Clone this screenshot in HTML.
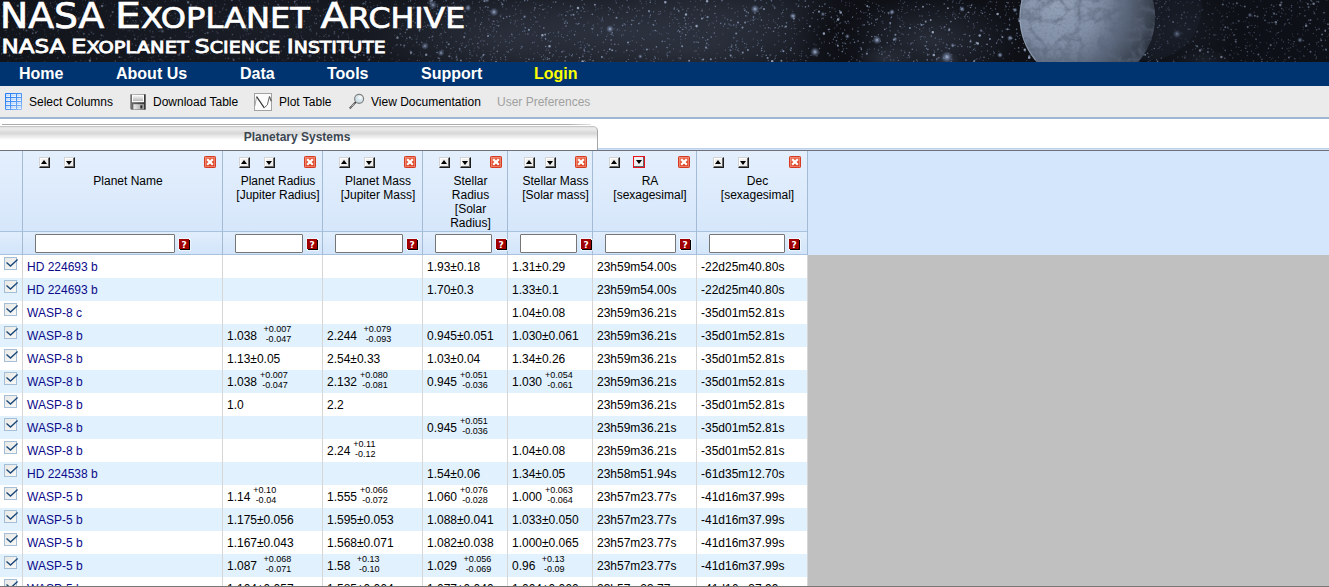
<!DOCTYPE html>
<html lang="en"><head><meta charset="utf-8"><title>NASA Exoplanet Archive</title>
<style>
html,body{margin:0;padding:0;}
body{width:1329px;height:587px;overflow:hidden;background:#fff;position:relative;font-family:"Liberation Sans",sans-serif;font-size:12px;color:#000;}
.abs{position:absolute;}
#banner{left:0;top:0;width:1329px;height:62px;background:#0e1016;overflow:hidden;}
#banner svg{position:absolute;left:0;top:0;}
#nav{left:0;top:62px;width:1329px;height:24px;background:#003471;}
#nav a{position:absolute;top:0;line-height:23px;font-size:16px;font-weight:bold;color:#fff;text-decoration:none;white-space:nowrap;}
#tb{left:0;top:86px;width:1329px;height:31px;background:#ebebeb;border-bottom:2px solid #9db7d3;}
#tb span.l{position:absolute;top:1px;line-height:31px;font-size:12px;white-space:nowrap;color:#000;}
#tb svg{position:absolute;}
#tabline{left:2px;top:124px;width:589px;height:1px;background:linear-gradient(90deg,#ababab 0,#ababab 96%,#e0e0e0 100%);}
#tab{left:-1px;top:126px;width:599px;height:24px;border-right:1px solid #a6a6a6;border-top:1px solid #c6c6c6;border-top-right-radius:5px;background:linear-gradient(#e0e0e0 0px,#ececec 2px,#dedede 4.5px,#d8d8d8 6.5px,#e8e8e8 9px,#fff 13px);box-sizing:border-box;text-align:center;font-weight:bold;color:#3c4652;line-height:21px;padding-right:2px;font-size:12px;}
#tline1{left:598px;top:148px;width:731px;height:1px;background:#bcd3ee;}
#tline2{left:598px;top:149px;width:731px;height:1px;background:#cfe0f5;}
#tline3{left:0;top:150px;width:1329px;height:1px;background:#6f7379;}
#hdr{left:0;top:151px;width:1329px;height:104px;background:#d3e6fc;}
#hdrc{left:0;top:151px;width:808px;height:80px;background:linear-gradient(#e4effd,#d6e7fb);}
#fl{left:0;top:231px;width:808px;height:24px;background:linear-gradient(#e0edfc,#d3e5fa);border-top:1px solid #a9c3df;border-bottom:1px solid #a9c3df;box-sizing:border-box;}
.vs{position:absolute;top:151px;width:1px;height:104px;background:#a3bbd5;}
.vd{position:absolute;top:255px;width:1px;height:332px;background:#d6d6d6;}
.hc{position:absolute;top:174px;text-align:center;line-height:14px;font-size:12px;color:#000;white-space:nowrap;}
.sb{position:absolute;top:157px;width:11px;height:11px;box-sizing:border-box;background:#efefef;border:1px solid;border-color:#d4d4d4 #1c1c1c #1c1c1c #d4d4d4;box-shadow:inset -1px -1px 0 #6a6a6a,inset 1px 1px 0 #fff;}
.sb i{position:absolute;left:1px;top:2px;width:0;height:0;border:3.5px solid transparent;}
.sb.u i{border-top:0;border-bottom:4px solid #000;}
.sb.d i{border-bottom:0;border-top:4px solid #000;top:3px;}
.sb.act{top:156px;width:12px;height:12px;border:1px solid #e8121e;box-shadow:inset -1px -1px 0 #5a6a6a;}
.sb.act i{left:1.5px;top:3px!important;}
.rx{position:absolute;top:156px;width:12px;height:12px;}
.inp{position:absolute;top:234px;height:19px;box-sizing:border-box;border:1px solid #767676;border-radius:1px;background:#fff;}
.q{position:absolute;top:239px;width:10px;height:10px;background:#a00000;box-shadow:1px 1px 0 #000,0 0 0 1px rgba(255,255,255,.55),1px 1px 0 1px rgba(255,255,255,.55);color:#fff;font:bold 9px/12px "DejaVu Sans","Liberation Sans",sans-serif;text-align:center;overflow:hidden;}
#gray{left:808px;top:255px;width:521px;height:332px;background:#c0c0c0;}
.row{position:absolute;left:0;width:808px;height:23px;}
.row.o{background:#e1f1fd;}
.row.e{background:#fff;}
.c{position:absolute;top:1px;line-height:23px;white-space:nowrap;font-size:12px;color:#000;}
.c.n{color:#0a0a8a;}
.ss{display:inline-block;vertical-align:middle;font-size:9px;line-height:10.6px;margin-left:3px;position:relative;top:-2.5px;}
.ss span{display:block;text-align:right;}
.cb{position:absolute;left:4px;top:2px;width:13px;height:13px;box-sizing:border-box;border:1px solid #a5bed8;background:linear-gradient(135deg,#e8e8e5,#f8f8f7);}
.cb svg{position:absolute;left:0;top:-2px;overflow:visible;}
#bot{left:0;top:586px;width:1329px;height:1px;background:#787878;}
</style></head><body>

<div id="banner" class="abs"><svg width="1329" height="62" viewBox="0 0 1329 62"><defs>
<radialGradient id="nb"><stop offset="0" stop-color="#363d4c" stop-opacity="0.9"/><stop offset="1" stop-color="#363d4c" stop-opacity="0"/></radialGradient><radialGradient id="dk"><stop offset="0" stop-color="#07080c" stop-opacity="0.9"/><stop offset="1" stop-color="#07080c" stop-opacity="0"/></radialGradient>
<radialGradient id="st"><stop offset="0" stop-color="#bccae6" stop-opacity="0.9"/><stop offset="0.4" stop-color="#8798bc" stop-opacity="0.55"/><stop offset="1" stop-color="#6a7ba0" stop-opacity="0"/></radialGradient>
<radialGradient id="pl" cx="0.27" cy="0.38" r="0.78"><stop offset="0" stop-color="#95a3b9"/><stop offset="0.4" stop-color="#8290a7"/><stop offset="0.68" stop-color="#5a667a"/><stop offset="0.9" stop-color="#39424f"/><stop offset="1" stop-color="#2a313d"/></radialGradient>
<filter id="tx" x="0" y="0" width="1" height="1"><feTurbulence type="turbulence" baseFrequency="0.05" numOctaves="4" seed="11" result="n"/><feColorMatrix in="n" type="matrix" values="0 0 0 0 0.1  0 0 0 0 0.13  0 0 0 0 0.19  -3.2 0 0 0 1.15"/><feComposite in2="SourceGraphic" operator="in"/></filter>
<filter id="sb" x="0" y="0" width="1" height="1" filterUnits="objectBoundingBox"><feGaussianBlur stdDeviation="0.45"/></filter>
<linearGradient id="lf" x1="0" y1="0" x2="1" y2="0"><stop offset="0" stop-color="#12151c" stop-opacity=".5"/><stop offset=".7" stop-color="#12151c" stop-opacity=".35"/><stop offset="1" stop-color="#12151c" stop-opacity="0"/></linearGradient>
<linearGradient id="rxg" x1="0" y1="0" x2="0.4" y2="1"><stop offset="0" stop-color="#f07a5c"/><stop offset="1" stop-color="#dc3c20"/></linearGradient></defs>
<ellipse cx="620" cy="30" rx="260" ry="70" fill="url(#nb)" opacity="0.80"/>
<ellipse cx="500" cy="40" rx="140" ry="50" fill="url(#nb)" opacity="0.55"/>
<ellipse cx="730" cy="20" rx="130" ry="50" fill="url(#nb)" opacity="0.50"/>
<ellipse cx="930" cy="40" rx="90" ry="45" fill="url(#nb)" opacity="0.70"/>
<ellipse cx="1180" cy="30" rx="60" ry="45" fill="url(#nb)" opacity="0.35"/>
<ellipse cx="250" cy="30" rx="300" ry="60" fill="url(#nb)" opacity="0.45"/>
<ellipse cx="885" cy="58" rx="30" ry="14" fill="url(#nb)" opacity="0.60"/>
<ellipse cx="1205" cy="60" rx="28" ry="12" fill="url(#nb)" opacity="0.50"/>
<ellipse cx="946" cy="60" rx="14" ry="8" fill="url(#nb)" opacity="0.80"/>
<ellipse cx="690" cy="50" rx="120" ry="30" fill="url(#nb)" opacity="0.40"/>
<ellipse cx="835" cy="30" rx="45" ry="40" fill="url(#dk)" opacity="0.7"/>
<path d="M430.4 9.4h.01M865.1 4.5h.01M712.2 22.7h.01M77.1 31.5h.01M49.8 26.9h.01M92.8 5.6h.01M564.2 51.3h.01M164.5 13.8h.01M833.9 58.8h.01M767.0 24.6h.01M1297.4 2.9h.01M1140.9 18.0h.01M191.7 7.3h.01M410.0 50.6h.01M240.2 36.1h.01M849.1 23.1h.01M728.0 3.9h.01M79.2 12.8h.01M904.3 26.5h.01M417.5 36.3h.01M602.3 18.6h.01M1055.7 43.3h.01M324.4 35.6h.01M698.0 54.3h.01M969.4 17.9h.01M1302.7 7.3h.01M555.7 46.9h.01M202.0 30.3h.01M52.1 41.4h.01M1016.1 35.5h.01M1163.5 19.5h.01M924.0 36.9h.01M770.7 28.3h.01M1116.3 58.6h.01M630.1 41.2h.01M80.6 43.5h.01M860.0 61.6h.01M1092.3 17.6h.01M512.7 41.5h.01M30.0 28.6h.01M223.3 7.3h.01M78.4 47.6h.01M171.9 15.4h.01M519.6 54.0h.01M107.1 27.8h.01M730.2 54.8h.01M1088.8 53.6h.01M370.0 25.7h.01M476.8 54.8h.01M1272.8 9.4h.01M234.2 14.4h.01M310.1 30.1h.01M782.9 16.3h.01M5.4 26.0h.01M490.7 35.1h.01M1266.7 42.8h.01M685.1 38.3h.01M898.7 3.3h.01M1195.5 48.4h.01M1162.2 49.5h.01M521.5 24.7h.01M137.6 39.3h.01M82.7 4.2h.01M277.4 10.1h.01M451.9 3.3h.01M0.3 9.4h.01M134.8 22.5h.01M33.9 54.2h.01M816.1 9.2h.01M335.3 21.5h.01M484.0 7.6h.01M1128.2 61.6h.01M619.3 30.0h.01M114.1 6.3h.01M455.4 16.4h.01M1101.5 10.0h.01M30.7 59.0h.01M702.1 9.1h.01M721.9 1.7h.01M701.9 60.7h.01M1147.4 43.2h.01M347.0 22.7h.01M222.0 47.9h.01M707.8 48.3h.01M438.1 13.8h.01M1078.5 61.1h.01M1133.1 50.0h.01M1087.6 45.9h.01M301.3 32.1h.01M472.5 1.8h.01M37.1 17.3h.01M344.4 42.9h.01M1271.2 27.7h.01M1245.3 61.3h.01M1269.2 22.6h.01M293.0 14.1h.01M261.4 12.7h.01M829.4 55.8h.01M1116.9 29.7h.01M867.8 49.6h.01M112.7 41.0h.01M1209.1 48.5h.01M996.9 29.6h.01M237.3 48.9h.01M441.9 49.7h.01M1291.3 24.5h.01M533.4 58.7h.01M963.3 10.5h.01M168.8 9.4h.01M1202.5 50.0h.01M194.3 51.2h.01M1302.8 40.8h.01M465.7 34.0h.01M174.1 0.9h.01M1290.3 40.3h.01M699.8 57.9h.01M576.5 54.0h.01M1098.0 13.1h.01M334.7 18.2h.01M319.7 36.4h.01M344.7 26.0h.01M174.2 56.4h.01M470.2 28.4h.01M775.3 56.1h.01M559.0 56.9h.01M666.7 33.0h.01M695.7 1.2h.01M584.9 11.4h.01M5.2 49.5h.01M229.0 29.4h.01M963.8 34.5h.01M433.2 32.1h.01M738.2 48.6h.01M141.0 34.7h.01M330.2 17.2h.01M1026.3 31.5h.01M746.5 47.1h.01M1212.7 27.5h.01M814.0 31.3h.01M680.7 42.9h.01M601.2 33.1h.01M635.3 58.4h.01M929.3 54.3h.01M1252.2 16.1h.01M743.6 58.5h.01M1116.4 8.5h.01M161.6 27.4h.01M96.4 14.9h.01M97.2 41.5h.01M1041.9 55.6h.01M205.3 44.4h.01M877.5 8.9h.01M1173.3 60.0h.01M291.8 59.1h.01M529.3 30.2h.01M1315.5 51.6h.01M214.6 26.8h.01M685.2 21.0h.01M260.1 19.7h.01M959.7 1.2h.01M736.3 27.3h.01M24.0 20.6h.01M829.2 31.8h.01M85.4 61.1h.01M1047.7 60.2h.01M139.3 16.5h.01M52.6 48.3h.01M359.4 8.0h.01M561.2 56.5h.01M1088.4 16.0h.01M198.5 57.0h.01M758.3 43.4h.01M118.9 3.6h.01M914.6 26.4h.01M96.2 58.2h.01M843.2 49.7h.01M111.3 53.1h.01M88.5 53.5h.01M603.1 21.0h.01M735.0 57.5h.01M356.0 8.0h.01M700.3 14.8h.01M145.5 10.0h.01M67.0 12.5h.01M414.6 18.9h.01M1009.4 18.0h.01M664.6 11.0h.01M461.2 1.1h.01M332.8 1.0h.01M974.3 34.2h.01M251.8 29.4h.01M1242.1 6.6h.01M1088.3 26.8h.01M657.9 51.7h.01M522.4 31.4h.01M914.0 60.9h.01M455.5 51.6h.01M939.2 39.4h.01M537.8 21.5h.01M72.3 8.0h.01M94.0 45.9h.01M339.7 10.1h.01M112.3 52.2h.01M1156.9 41.6h.01M374.7 15.0h.01M389.5 28.5h.01M209.4 27.6h.01M349.9 59.6h.01M1292.6 33.9h.01M324.9 59.9h.01M411.4 22.1h.01M1.4 23.7h.01M630.8 31.2h.01M267.1 31.3h.01M6.6 16.4h.01M119.3 24.8h.01M55.4 1.4h.01M404.3 14.4h.01M778.2 32.8h.01M997.5 40.8h.01M951.6 54.5h.01M517.7 20.2h.01M1308.7 9.3h.01M962.4 39.9h.01M58.2 51.8h.01M1185.4 38.9h.01M975.3 50.4h.01M185.1 32.5h.01M670.3 51.8h.01M1069.4 51.2h.01M776.2 55.4h.01M907.6 43.0h.01M305.6 1.9h.01M176.9 22.4h.01M139.4 51.8h.01M742.3 38.9h.01M832.3 42.2h.01M650.3 0.2h.01M1060.1 46.4h.01M668.4 33.2h.01M876.2 4.1h.01M979.2 15.6h.01M98.9 16.5h.01M969.3 12.7h.01M983.2 60.5h.01M656.5 23.7h.01M636.6 42.4h.01M1019.3 38.3h.01M854.2 4.8h.01M195.9 15.7h.01M987.7 18.9h.01M754.6 0.8h.01M80.6 16.7h.01M893.1 42.9h.01M898.0 18.0h.01M686.5 28.8h.01M619.8 7.3h.01M1187.7 12.4h.01M1299.9 58.0h.01M23.3 28.5h.01M1089.6 60.0h.01M597.3 16.7h.01M278.9 58.6h.01M280.0 36.1h.01M188.4 32.5h.01M1266.2 8.2h.01M1090.1 31.5h.01M1178.6 43.6h.01M307.5 55.7h.01M646.1 1.5h.01M4.8 30.5h.01M599.1 18.7h.01M187.0 21.3h.01M420.1 52.1h.01M2.3 46.5h.01M1115.2 7.4h.01M1231.2 44.2h.01M1198.2 18.0h.01M494.7 24.4h.01M1327.4 36.5h.01M479.4 26.5h.01M365.7 3.0h.01M135.2 51.7h.01M379.6 58.0h.01M331.4 16.5h.01M679.1 11.8h.01M496.2 59.3h.01M1175.2 50.3h.01M838.5 56.6h.01M1250.2 34.1h.01M956.3 3.1h.01M973.3 28.0h.01M1000.3 40.0h.01M380.4 3.0h.01M1231.7 7.9h.01M627.5 21.3h.01M395.7 45.8h.01M1297.5 16.1h.01M871.8 18.7h.01M740.7 24.5h.01M222.4 10.0h.01M276.3 56.2h.01M660.6 13.6h.01M1204.4 61.8h.01M598.0 8.7h.01M255.7 5.6h.01M454.5 5.6h.01M317.8 16.0h.01M757.0 55.0h.01M996.3 25.6h.01M550.1 32.5h.01M500.9 21.0h.01M82.5 17.2h.01M1286.1 7.8h.01M669.0 39.0h.01M1146.7 13.4h.01M360.2 15.4h.01M531.3 27.6h.01M1267.8 52.6h.01M1160.1 1.4h.01M42.9 44.0h.01M1190.4 29.3h.01M780.4 0.0h.01M520.3 57.5h.01M1097.2 53.0h.01M1292.1 15.4h.01M144.9 9.6h.01M694.2 42.3h.01M1251.2 44.7h.01M860.3 47.4h.01M607.8 34.2h.01M52.6 48.5h.01M309.1 57.0h.01M857.9 18.8h.01M170.1 15.6h.01M845.6 43.3h.01M149.0 4.4h.01M697.0 36.1h.01M515.8 13.9h.01M798.8 0.6h.01M400.7 28.6h.01M1274.4 40.0h.01M1174.5 29.5h.01M312.0 15.3h.01M1276.7 43.7h.01M408.5 1.4h.01M662.3 41.8h.01M558.2 15.9h.01M886.9 57.4h.01M301.4 2.1h.01M449.3 26.1h.01M907.1 12.3h.01M1059.3 45.8h.01M671.0 12.7h.01M1288.9 19.3h.01M1089.8 14.3h.01M294.3 47.1h.01M392.0 59.0h.01M658.9 11.6h.01M296.8 25.9h.01M884.2 58.8h.01M194.5 24.4h.01M283.0 60.4h.01M188.6 3.2h.01M79.9 24.4h.01M1193.7 54.8h.01M973.8 61.8h.01M1238.1 20.4h.01M246.5 58.0h.01M991.8 2.0h.01M883.0 23.5h.01M496.9 20.6h.01M224.9 0.2h.01M371.9 21.8h.01M1269.9 7.7h.01M1281.5 12.9h.01M474.0 50.9h.01M1092.4 26.8h.01M65.5 29.4h.01M495.3 57.0h.01M256.5 22.6h.01M1192.1 1.9h.01M546.0 50.3h.01M1018.9 2.5h.01M46.3 3.9h.01M1222.8 15.9h.01M993.1 55.7h.01M450.6 16.9h.01M1272.8 38.3h.01M348.4 44.4h.01M420.6 17.1h.01M5.0 46.9h.01M1218.0 39.3h.01M1253.6 1.5h.01M310.8 29.5h.01M1271.6 59.1h.01M513.7 15.6h.01M571.4 30.6h.01M1233.4 11.3h.01M1066.6 45.8h.01M1093.4 47.9h.01M807.0 20.3h.01M424.7 22.4h.01M1039.6 4.9h.01M262.2 46.7h.01M328.7 4.0h.01M45.0 34.3h.01M432.9 60.8h.01M1174.1 61.2h.01M352.0 5.2h.01M128.1 30.9h.01M943.3 27.7h.01M311.2 25.8h.01M824.4 41.8h.01M994.1 52.5h.01M883.0 7.5h.01M1117.5 18.2h.01M753.4 23.1h.01M980.9 12.3h.01M328.8 15.2h.01M203.8 54.8h.01M768.5 20.2h.01M526.4 61.5h.01M674.2 14.3h.01M1074.4 40.5h.01M1317.0 6.3h.01M631.0 50.8h.01M1117.1 56.7h.01M53.6 18.2h.01M158.4 11.8h.01M1293.1 36.2h.01M1236.2 23.1h.01M1151.1 27.8h.01M345.5 48.2h.01M1256.8 6.6h.01M792.3 38.4h.01M289.3 22.9h.01M187.9 12.6h.01M338.8 37.2h.01M866.0 12.6h.01M15.1 20.3h.01M901.5 11.5h.01M414.9 12.6h.01M1056.9 34.0h.01M84.1 6.3h.01M525.3 34.1h.01M849.5 5.7h.01M217.5 43.1h.01M544.6 17.6h.01M408.8 59.1h.01M415.1 35.1h.01M474.7 25.8h.01M1148.6 61.8h.01M483.5 12.2h.01M967.6 12.6h.01M7.8 55.9h.01M563.2 50.9h.01M539.9 54.7h.01M612.5 10.1h.01M19.7 34.2h.01M851.4 56.4h.01M118.3 38.6h.01M492.9 31.3h.01M193.9 17.6h.01M692.6 57.4h.01M144.6 30.4h.01M1069.6 59.9h.01M262.3 7.9h.01M1253.3 60.5h.01M641.6 3.3h.01M1230.9 24.0h.01M1201.7 38.5h.01M1095.8 9.9h.01M1044.4 13.8h.01M537.6 52.5h.01M1102.0 11.3h.01M289.9 24.8h.01M688.3 23.8h.01M163.5 15.3h.01M963.4 55.6h.01M54.6 34.9h.01M1006.7 2.4h.01M1114.0 7.3h.01M796.8 34.1h.01M833.3 19.0h.01M558.3 36.1h.01M565.8 40.8h.01M593.8 27.2h.01M31.1 38.4h.01M650.5 14.6h.01M1014.8 48.4h.01M609.1 11.1h.01M628.9 6.6h.01M170.7 26.7h.01M121.9 27.4h.01M678.0 2.5h.01M845.8 5.1h.01M974.8 48.2h.01M679.8 3.4h.01M669.7 23.4h.01M1263.7 8.4h.01M1139.0 61.8h.01M972.9 50.5h.01M257.4 60.9h.01M653.7 59.3h.01M1217.4 10.2h.01M1047.8 57.7h.01M87.1 21.8h.01M1005.0 9.8h.01M1191.5 17.0h.01M1084.0 8.9h.01M667.4 57.0h.01M276.9 16.3h.01M672.5 19.8h.01M49.0 11.3h.01M214.3 58.1h.01M903.3 55.5h.01M224.3 48.7h.01M152.9 32.9h.01M845.7 22.3h.01M1160.2 34.4h.01M770.9 54.7h.01M139.0 61.6h.01M837.0 24.4h.01M1060.1 16.4h.01M1316.4 35.8h.01M478.8 47.4h.01M587.8 11.0h.01M988.2 3.0h.01M1089.5 15.7h.01M849.5 61.0h.01M778.6 41.1h.01M415.5 0.1h.01M44.9 9.3h.01M818.7 26.8h.01M681.3 55.5h.01M175.5 14.1h.01M868.0 1.4h.01M3.5 22.0h.01M141.4 22.1h.01M298.0 36.2h.01M782.9 12.7h.01M829.2 29.4h.01M179.1 58.1h.01M323.7 9.3h.01M127.3 39.6h.01M1157.9 48.5h.01M534.2 16.4h.01M15.3 40.0h.01M747.3 21.7h.01M858.0 27.5h.01M1245.5 45.5h.01M330.3 56.0h.01M58.5 33.0h.01M539.6 14.7h.01M77.6 48.3h.01M16.4 34.2h.01M1250.5 8.8h.01M265.2 37.7h.01M673.7 39.8h.01M1081.0 10.8h.01M411.2 18.6h.01M64.4 55.1h.01M1040.6 44.4h.01M8.4 52.4h.01M990.4 28.8h.01M985.8 28.1h.01M300.3 6.5h.01M308.7 2.4h.01M445.9 46.5h.01M923.8 52.4h.01M945.8 16.5h.01M736.0 27.0h.01M1047.9 32.4h.01M352.6 39.8h.01M1282.7 13.5h.01M1169.6 0.9h.01M346.0 14.6h.01M988.6 58.6h.01M991.6 20.3h.01M1169.7 20.4h.01M317.9 56.3h.01M838.2 43.0h.01M884.1 60.7h.01M624.0 52.1h.01M927.1 53.2h.01M581.1 44.9h.01M758.0 19.1h.01M281.7 38.6h.01M103.4 56.5h.01M192.2 1.7h.01M141.8 57.6h.01M458.3 8.8h.01M38.2 2.6h.01M920.5 39.3h.01M926.3 45.7h.01M87.4 36.6h.01M483.0 50.7h.01M1089.2 55.3h.01M87.6 53.8h.01M1215.2 58.5h.01M142.4 12.8h.01M148.8 2.1h.01M1126.6 50.3h.01M842.8 51.2h.01M839.3 17.8h.01M132.7 6.1h.01M1006.5 12.7h.01M424.1 26.3h.01M27.8 15.9h.01M375.6 44.4h.01M489.1 19.9h.01M1281.2 31.2h.01M1131.5 38.3h.01M41.2 25.6h.01M580.0 47.9h.01M460.9 43.7h.01M714.8 13.4h.01M1145.9 5.6h.01M1089.5 10.6h.01M1.7 12.5h.01M1012.9 60.6h.01M5.8 30.4h.01M653.2 49.4h.01M245.2 30.7h.01M461.4 51.6h.01M346.3 58.5h.01M377.1 13.3h.01M929.6 30.9h.01M146.1 39.5h.01M107.5 48.9h.01M926.5 48.8h.01M834.5 22.0h.01M533.3 24.5h.01M1183.4 5.3h.01M1180.7 1.6h.01M273.9 16.3h.01M1197.7 31.1h.01M504.1 54.8h.01M310.4 28.6h.01M706.4 46.8h.01M1000.7 40.1h.01M463.1 20.3h.01M206.4 52.3h.01M879.9 46.0h.01M225.3 27.2h.01M1027.9 35.9h.01M167.5 28.6h.01M1176.3 14.8h.01M254.6 18.7h.01M934.5 52.3h.01M205.5 9.7h.01M329.0 20.2h.01M694.0 10.0h.01M436.0 11.7h.01M1296.0 45.2h.01M135.3 59.7h.01M135.1 23.8h.01M1307.5 49.3h.01M974.5 27.0h.01M260.7 39.6h.01M142.0 12.8h.01M516.1 2.1h.01M530.3 49.0h.01M921.6 31.0h.01M840.4 28.7h.01M188.5 37.4h.01M537.9 45.9h.01M1206.7 26.7h.01M762.8 46.4h.01M559.7 14.2h.01M959.8 54.6h.01M1028.7 43.4h.01M1132.9 42.1h.01M852.6 28.1h.01M416.0 39.0h.01M130.1 26.0h.01M1039.8 44.2h.01M836.8 15.5h.01M562.9 28.2h.01M826.1 25.4h.01M897.4 57.7h.01M243.3 40.6h.01M1034.2 24.1h.01M651.0 60.4h.01M50.7 33.7h.01M213.8 48.5h.01M1250.0 32.2h.01M134.3 35.6h.01M719.0 44.5h.01M680.7 39.6h.01M1101.7 32.3h.01M545.4 58.8h.01M279.2 42.4h.01M521.6 47.3h.01M162.7 61.0h.01M472.4 3.5h.01M364.6 24.8h.01M17.7 26.0h.01M558.9 43.3h.01M468.0 16.4h.01M298.3 46.0h.01M1249.2 32.7h.01M290.9 49.7h.01M520.9 13.1h.01M171.8 48.1h.01M1075.9 39.3h.01M623.5 34.8h.01M300.3 59.8h.01M469.3 39.6h.01M1088.1 50.6h.01M622.1 18.2h.01M728.6 7.8h.01M1108.0 22.0h.01M1130.5 16.6h.01M499.9 15.7h.01M566.3 11.5h.01M3.6 44.8h.01M373.7 15.2h.01M401.1 29.7h.01M569.5 39.5h.01M876.2 22.5h.01M1234.3 53.0h.01M75.8 51.3h.01M1203.8 48.6h.01M186.6 51.5h.01M841.5 0.9h.01M15.3 59.0h.01M871.8 15.5h.01M134.9 8.8h.01M310.5 48.1h.01M460.4 9.5h.01M1201.5 49.1h.01M223.2 55.3h.01M808.5 48.4h.01M888.4 55.4h.01M1047.4 52.0h.01M262.3 43.0h.01M705.4 46.0h.01M582.9 54.7h.01M737.7 16.4h.01M311.2 8.6h.01M655.3 3.6h.01M620.8 9.0h.01M653.0 30.9h.01M717.1 53.5h.01M8.8 52.1h.01M621.9 34.9h.01M884.2 52.1h.01M498.3 26.0h.01M1276.7 4.7h.01M846.6 39.4h.01M37.9 37.8h.01M907.2 57.8h.01M439.2 60.9h.01M678.6 30.0h.01M1192.9 2.1h.01M954.5 38.8h.01M450.0 53.4h.01M486.6 29.4h.01M698.4 47.8h.01M280.1 27.0h.01M561.4 34.3h.01M1098.7 18.2h.01M1100.1 25.0h.01M669.5 16.8h.01M673.0 60.4h.01M869.9 49.1h.01M439.8 19.7h.01M397.7 36.4h.01M843.7 48.6h.01M53.2 44.8h.01M1177.0 33.8h.01M66.1 18.6h.01M8.3 11.8h.01M1224.6 37.7h.01M874.5 48.9h.01M1209.2 37.9h.01M819.6 38.9h.01M925.5 37.0h.01M905.0 13.2h.01M886.4 28.4h.01M1013.6 6.3h.01M240.9 2.3h.01M1029.4 56.7h.01M871.4 22.9h.01M1093.2 48.8h.01M747.0 16.0h.01M401.4 26.2h.01M423.3 26.7h.01M852.9 57.9h.01M72.6 35.2h.01M52.3 7.4h.01M1076.9 35.7h.01M1220.9 27.7h.01M18.8 24.0h.01M786.7 58.1h.01M1303.5 29.5h.01M548.1 6.3h.01M856.5 13.2h.01M201.7 1.0h.01M6.4 42.4h.01M161.7 59.9h.01M117.1 53.9h.01M171.4 1.1h.01M956.0 15.0h.01M974.9 11.6h.01M66.6 48.0h.01M948.3 53.0h.01M969.8 5.2h.01M835.4 44.0h.01M612.1 57.8h.01M337.6 59.8h.01M953.2 0.7h.01M19.6 40.3h.01M1086.2 4.9h.01M413.4 45.2h.01M220.6 53.4h.01M646.3 3.7h.01M488.5 35.6h.01M583.1 42.0h.01M192.6 49.4h.01M482.8 40.0h.01M836.9 25.9h.01M512.6 48.7h.01M1255.8 48.6h.01M753.3 18.1h.01M80.6 60.4h.01M934.6 51.3h.01M441.3 37.6h.01M1299.0 51.5h.01M798.9 19.1h.01M569.6 55.1h.01M500.6 42.5h.01M799.8 55.6h.01M1073.1 17.6h.01M2.2 16.3h.01M561.5 36.4h.01M1084.4 55.0h.01M56.2 51.7h.01M1078.8 53.8h.01M760.1 17.0h.01M1131.2 50.0h.01M909.9 56.7h.01M461.0 5.3h.01M735.8 49.4h.01M266.4 46.5h.01M1238.3 14.5h.01M806.6 42.0h.01M618.4 12.8h.01M338.5 46.6h.01M1052.1 28.5h.01M116.6 50.0h.01M1026.2 14.4h.01M770.3 55.6h.01M1176.3 32.4h.01M633.4 36.5h.01M251.4 11.9h.01M240.1 43.5h.01M482.2 35.0h.01M534.9 32.1h.01M198.0 2.8h.01M1325.2 23.2h.01M141.0 39.2h.01M1046.4 9.7h.01M793.7 21.4h.01M690.4 1.3h.01M44.6 61.4h.01M1151.0 30.2h.01M753.8 16.2h.01M1035.5 26.4h.01M1257.9 47.6h.01M1088.2 59.7h.01M337.6 2.3h.01M267.1 11.2h.01M111.2 3.2h.01M740.8 54.0h.01M609.1 58.7h.01M1209.3 4.0h.01M794.8 24.6h.01M159.4 59.5h.01M341.8 35.0h.01M851.4 59.3h.01M890.1 24.4h.01M595.8 9.9h.01M1283.5 61.5h.01M294.7 2.4h.01M340.0 21.8h.01M1199.8 56.1h.01M1112.7 2.9h.01M1045.1 44.0h.01M859.4 61.1h.01M74.1 9.0h.01M1003.3 58.2h.01M899.6 18.5h.01M786.1 47.0h.01M140.1 20.1h.01M341.6 7.7h.01M639.7 10.5h.01M316.9 8.9h.01M900.6 0.8h.01M953.2 12.1h.01M47.9 57.5h.01M293.1 57.9h.01M1151.9 55.1h.01M185.7 27.7h.01M128.9 57.6h.01M1119.3 39.0h.01M601.2 21.1h.01M1093.8 29.6h.01M834.9 8.9h.01M294.6 3.5h.01M948.5 34.3h.01M192.3 54.0h.01M354.0 25.5h.01M206.9 16.8h.01M1115.8 20.7h.01M223.0 30.4h.01M422.7 56.0h.01M151.7 60.7h.01M75.6 55.5h.01M888.1 13.1h.01M634.5 17.7h.01M342.6 12.5h.01M484.1 61.4h.01M1326.5 57.4h.01M129.7 17.9h.01M1191.0 3.6h.01M965.5 18.2h.01M1300.6 1.0h.01M1072.5 21.1h.01M186.3 0.1h.01M1106.1 32.6h.01M247.0 27.0h.01M1212.0 13.5h.01M759.3 8.6h.01M239.4 47.8h.01M945.7 12.2h.01M105.3 5.4h.01M808.8 30.7h.01M364.0 12.8h.01M813.9 43.9h.01M1078.6 36.1h.01M268.8 4.1h.01M973.8 25.3h.01M959.1 3.4h.01M1077.4 20.8h.01M1118.9 53.6h.01M655.2 1.0h.01M1209.7 29.6h.01M1158.9 16.5h.01M247.3 51.6h.01M487.9 10.1h.01M493.3 36.9h.01M6.2 32.2h.01M592.4 32.0h.01M160.5 44.3h.01M1085.2 53.7h.01M426.6 44.1h.01M506.9 46.6h.01M81.3 54.1h.01M1267.9 30.7h.01M682.2 32.9h.01M714.1 1.3h.01M1285.7 13.9h.01M242.4 6.4h.01M332.9 50.7h.01M40.0 6.0h.01M928.9 12.1h.01M23.5 37.2h.01M766.1 32.4h.01M933.8 6.4h.01M1155.6 44.5h.01M60.0 7.6h.01M656.0 31.0h.01M371.6 7.6h.01M539.1 8.5h.01M786.5 53.4h.01M195.7 35.5h.01M992.2 10.2h.01M1097.8 58.1h.01M516.6 26.1h.01M1116.0 32.6h.01M525.8 58.4h.01M1032.5 21.0h.01M319.5 20.8h.01M578.9 60.8h.01M1069.0 56.6h.01M1083.2 52.6h.01M71.2 32.1h.01M1273.0 57.9h.01M331.3 26.2h.01M840.8 22.6h.01M705.4 4.3h.01M575.5 31.3h.01M27.7 8.6h.01M1288.7 48.1h.01M1245.2 39.3h.01M1075.5 54.8h.01M1175.7 2.1h.01M852.7 16.5h.01M901.6 17.0h.01M720.7 57.3h.01M825.7 15.5h.01M691.5 26.9h.01M1263.7 17.8h.01M405.9 40.1h.01M160.0 36.8h.01M1270.6 31.9h.01M356.7 28.9h.01M709.5 9.2h.01M164.7 8.1h.01M390.2 25.2h.01M383.2 15.1h.01M116.7 33.9h.01M1116.0 37.8h.01M757.8 40.3h.01M267.4 44.0h.01M612.5 34.0h.01M814.4 29.1h.01M412.7 15.0h.01M294.5 31.8h.01M509.2 36.3h.01M15.8 21.9h.01M1145.4 14.8h.01M739.8 30.5h.01M378.5 61.2h.01M392.7 47.9h.01M210.7 4.1h.01M1157.9 27.3h.01M82.4 24.0h.01M584.6 45.6h.01M145.2 14.0h.01M1274.9 45.8h.01M205.4 20.9h.01M468.4 41.9h.01M819.1 52.7h.01M1091.4 32.1h.01M981.8 46.1h.01M1009.6 29.5h.01M1043.2 43.9h.01M1215.6 7.9h.01M1157.3 0.3h.01M1017.6 36.3h.01M661.7 59.7h.01M760.1 25.9h.01M1041.5 54.1h.01M807.1 23.5h.01M601.1 28.4h.01M960.9 18.2h.01M519.2 34.4h.01M511.0 20.0h.01M1046.0 52.7h.01M663.9 27.5h.01M244.8 18.9h.01M192.7 35.7h.01M772.9 5.5h.01M1222.9 20.1h.01M1120.9 52.0h.01M1274.2 12.7h.01M566.7 56.5h.01M14.2 2.9h.01M750.8 30.8h.01M1223.1 48.0h.01M715.7 61.9h.01M687.7 32.1h.01M910.7 24.2h.01M475.4 36.9h.01M466.6 58.8h.01M899.0 32.6h.01M131.5 23.2h.01M532.8 34.8h.01M762.9 54.5h.01M1281.8 30.2h.01M585.0 38.7h.01M1323.8 21.3h.01M704.6 50.6h.01M226.9 19.7h.01M1300.3 51.2h.01M681.2 6.9h.01M1188.8 42.8h.01M1090.5 61.4h.01M1180.3 26.1h.01M207.9 18.0h.01M679.9 31.3h.01M250.0 11.3h.01M837.4 37.4h.01M469.4 61.6h.01M845.9 2.6h.01M546.8 48.8h.01M407.7 42.8h.01M5.2 18.9h.01M1119.2 36.3h.01M887.9 12.2h.01M661.7 34.3h.01M353.5 40.1h.01M706.3 61.8h.01M763.5 25.5h.01M161.5 9.7h.01M1009.4 6.6h.01M133.0 10.6h.01M694.4 51.0h.01M814.7 50.0h.01M82.6 0.8h.01M1024.1 20.0h.01M950.8 21.9h.01M225.2 16.5h.01M132.2 56.0h.01M773.8 21.6h.01M597.8 23.9h.01M72.7 55.2h.01M774.4 59.5h.01M584.3 38.5h.01M331.4 2.7h.01M1237.1 53.0h.01M418.4 55.7h.01M1084.3 18.8h.01M800.8 59.5h.01M658.6 58.9h.01M322.9 24.2h.01M954.8 13.7h.01M410.9 54.3h.01M643.8 49.2h.01M323.5 10.8h.01M476.3 11.6h.01M1291.2 18.0h.01M746.3 7.1h.01M709.4 23.9h.01M535.8 4.1h.01M163.9 51.2h.01M466.8 15.2h.01M254.1 17.6h.01M315.2 2.2h.01M882.8 21.2h.01M207.2 43.8h.01M123.1 16.7h.01M1109.7 7.9h.01M589.2 51.9h.01M1069.8 9.9h.01M469.0 44.8h.01M500.9 59.4h.01M276.5 59.0h.01M670.9 14.1h.01M601.6 8.1h.01M938.9 16.2h.01M1195.6 36.4h.01M489.1 15.3h.01M808.3 13.2h.01M1159.4 7.6h.01M681.8 33.6h.01M359.4 47.8h.01M511.4 40.8h.01M754.4 19.3h.01M518.2 5.3h.01M235.3 52.8h.01M426.7 41.1h.01M144.8 34.8h.01M480.4 31.0h.01M394.7 4.1h.01M413.7 14.0h.01M167.6 44.4h.01M375.3 25.0h.01M1208.0 48.0h.01M1173.2 53.4h.01M175.7 17.1h.01M39.3 42.1h.01M881.9 21.8h.01M548.3 40.9h.01M929.3 15.4h.01M1125.3 21.8h.01M835.7 11.3h.01M153.1 56.6h.01M975.6 44.2h.01M53.8 2.5h.01M215.3 12.3h.01M402.8 23.6h.01M52.1 19.3h.01M848.3 11.1h.01M1115.6 35.4h.01M952.4 15.8h.01M578.0 42.4h.01M463.9 0.1h.01M1108.8 48.1h.01M380.5 2.7h.01M1135.2 37.7h.01M62.9 15.2h.01M147.8 49.1h.01M279.3 56.7h.01M996.1 5.3h.01M923.2 24.4h.01M993.5 51.4h.01M373.7 5.6h.01M1257.7 26.3h.01M1236.2 42.9h.01M981.6 51.5h.01M834.7 28.1h.01M72.2 43.3h.01M569.3 31.7h.01M1233.5 7.9h.01M1012.6 2.7h.01M933.9 50.0h.01M347.1 33.9h.01M1288.4 39.5h.01M722.9 15.5h.01M78.9 22.2h.01M547.1 12.5h.01M412.7 8.5h.01M939.6 41.6h.01M316.1 15.0h.01M684.9 27.6h.01M1243.7 21.8h.01M397.9 54.9h.01M188.6 34.9h.01M443.3 50.6h.01M728.6 47.2h.01M224.9 41.3h.01M795.7 28.6h.01M1018.2 51.5h.01M152.1 17.9h.01M479.1 12.8h.01M80.2 17.4h.01M262.0 43.5h.01M595.4 7.0h.01M431.2 29.1h.01M482.4 10.4h.01M95.4 0.7h.01M1318.5 46.5h.01M111.6 44.5h.01M1302.7 34.9h.01M144.6 30.3h.01M577.1 11.8h.01M721.7 0.5h.01M1222.1 40.0h.01M834.3 58.0h.01M867.3 15.6h.01M326.9 8.6h.01M36.8 48.0h.01M1115.8 18.4h.01M246.8 39.6h.01M1124.0 57.5h.01M223.9 48.6h.01M1103.6 46.0h.01M434.1 11.4h.01M1096.9 19.8h.01M489.8 34.2h.01M490.8 51.5h.01M318.1 2.6h.01M753.4 38.9h.01M1089.4 43.7h.01M1203.0 58.6h.01M657.0 31.0h.01M209.3 18.6h.01M772.3 5.0h.01M914.3 10.1h.01M589.0 60.1h.01M119.2 2.5h.01M584.1 11.8h.01M960.8 0.2h.01M1117.5 53.0h.01M1045.8 26.4h.01M376.4 41.0h.01M683.9 26.1h.01M450.1 27.2h.01M885.3 51.2h.01M1201.4 10.2h.01M393.0 27.5h.01M748.7 21.6h.01M259.7 5.3h.01M430.2 28.5h.01M1290.9 56.3h.01M1150.1 60.4h.01M1278.3 38.4h.01M1078.0 3.7h.01M899.0 37.8h.01M394.8 35.4h.01M1266.3 29.8h.01M860.3 18.6h.01M456.4 54.9h.01M37.0 11.7h.01M902.0 27.7h.01M113.2 40.9h.01M494.4 36.0h.01M553.4 32.9h.01M750.6 24.6h.01M151.8 11.2h.01M1182.8 34.0h.01M149.2 53.5h.01M336.9 5.9h.01M705.4 15.6h.01M650.2 34.3h.01M301.1 35.5h.01M150.2 31.8h.01M782.1 5.0h.01M542.3 4.6h.01M584.1 53.5h.01M731.7 44.3h.01M1005.9 7.1h.01M1316.6 44.7h.01M135.7 51.5h.01M520.9 10.6h.01M1275.9 34.9h.01M1029.9 8.5h.01M1031.5 3.6h.01M314.8 23.1h.01M20.2 36.8h.01M283.3 18.6h.01M940.2 26.4h.01M1181.0 38.5h.01M1159.1 34.9h.01M1219.4 54.0h.01M223.3 46.2h.01M453.7 47.3h.01M904.4 51.2h.01M163.1 23.1h.01M979.8 58.8h.01M959.2 2.7h.01M802.4 6.2h.01M729.4 49.8h.01M150.1 57.4h.01M897.4 15.8h.01M256.7 27.7h.01M1113.9 36.0h.01M150.9 1.3h.01M146.7 49.6h.01M246.2 34.4h.01M385.5 42.6h.01M506.1 8.9h.01M1163.4 33.4h.01M916.4 50.1h.01M1260.9 0.9h.01M455.0 9.4h.01M666.9 54.1h.01M1063.8 2.2h.01M242.3 50.7h.01M903.1 24.3h.01M632.3 9.8h.01M1123.2 24.4h.01M1160.2 37.9h.01M100.8 20.4h.01M287.5 55.4h.01M783.1 2.7h.01M225.6 22.4h.01M621.7 35.8h.01M515.5 21.9h.01M8.0 35.9h.01M443.6 1.3h.01M610.6 61.2h.01M60.3 9.0h.01M891.7 16.9h.01M363.3 31.0h.01M348.3 35.3h.01M701.9 59.3h.01M1318.6 2.1h.01M745.1 47.8h.01M1159.4 48.0h.01M841.4 39.3h.01M482.3 17.5h.01M1057.0 54.1h.01M1247.5 42.2h.01M404.0 47.3h.01M982.8 31.6h.01M844.2 21.7h.01M731.9 25.2h.01M80.3 20.9h.01M429.5 61.3h.01M639.9 22.8h.01M323.5 14.6h.01M464.1 8.4h.01M9.6 54.0h.01M602.2 27.6h.01M755.8 18.7h.01M224.5 4.1h.01M400.7 19.1h.01M965.7 34.2h.01M1245.8 21.1h.01M1224.3 36.2h.01M106.4 11.1h.01M771.5 61.2h.01M474.4 48.0h.01M569.2 53.8h.01M90.0 30.0h.01M1194.9 17.1h.01M342.3 1.4h.01M218.7 16.6h.01M936.1 13.5h.01M531.0 12.4h.01M801.3 53.6h.01M861.3 12.2h.01M975.3 59.7h.01M798.8 4.9h.01M1075.8 54.3h.01M453.4 8.5h.01M250.1 33.3h.01M1163.5 39.7h.01M1226.5 13.2h.01M434.3 46.5h.01M862.4 25.1h.01M902.3 20.9h.01M76.3 25.7h.01M60.4 38.8h.01M444.6 30.7h.01M794.5 15.9h.01M615.8 0.8h.01M1229.7 35.0h.01M1312.4 3.5h.01M816.0 44.9h.01M437.5 5.8h.01M207.6 8.8h.01M1019.6 5.6h.01M1081.8 26.2h.01M715.9 36.5h.01M737.6 40.8h.01M799.5 20.5h.01M984.9 16.0h.01M945.5 47.3h.01M1031.3 19.2h.01M1026.8 60.6h.01M602.3 17.3h.01M695.5 58.3h.01M175.2 0.6h.01M632.3 40.6h.01M1028.9 22.5h.01M1315.1 14.1h.01M1005.5 5.6h.01M37.1 8.3h.01M80.0 31.1h.01M737.9 11.3h.01M1248.9 22.7h.01M198.4 11.0h.01M980.5 57.1h.01M215.4 1.8h.01M1034.1 15.0h.01M1305.5 30.9h.01M845.4 21.3h.01M1063.9 28.5h.01M430.4 56.0h.01M143.3 45.5h.01M87.0 40.0h.01M534.1 53.6h.01M79.7 35.0h.01M544.8 57.0h.01M1255.8 38.9h.01M297.8 15.6h.01M348.6 26.9h.01M307.5 12.6h.01M1008.9 39.8h.01M396.7 61.6h.01M287.9 35.3h.01M208.3 53.5h.01M1155.3 16.6h.01M998.8 51.0h.01M375.5 20.6h.01M645.3 55.2h.01M214.8 42.3h.01M794.2 28.1h.01M769.8 54.7h.01M278.8 54.8h.01M478.9 48.3h.01M1147.4 11.3h.01M1148.2 61.7h.01M395.5 1.5h.01M148.3 60.4h.01M12.5 56.5h.01M200.4 45.6h.01M129.6 10.5h.01M907.4 5.6h.01M451.2 56.9h.01M952.0 54.7h.01M1302.0 2.0h.01M311.8 49.1h.01M916.3 2.3h.01M670.9 14.4h.01M572.1 6.5h.01M26.5 61.4h.01M420.6 54.5h.01M160.1 30.2h.01M180.5 26.6h.01M237.9 42.5h.01M196.6 45.8h.01M665.5 7.0h.01M469.9 30.8h.01M1220.9 21.7h.01M285.9 60.0h.01M1173.7 45.3h.01M362.8 11.0h.01M351.7 4.3h.01M57.4 31.5h.01M542.4 34.5h.01M481.9 0.7h.01M914.5 40.5h.01M722.9 34.0h.01M917.4 60.9h.01M1161.6 44.5h.01M530.6 19.7h.01M557.0 60.3h.01M514.4 23.9h.01M544.9 8.9h.01M1326.8 0.3h.01M807.8 57.4h.01M338.5 37.9h.01M501.0 14.9h.01M263.7 7.2h.01M1120.4 48.6h.01M1207.4 3.1h.01M922.6 20.1h.01M858.8 34.0h.01M419.5 60.2h.01M1.2 46.3h.01M1134.3 31.6h.01M787.2 61.7h.01M311.6 39.0h.01M987.9 23.5h.01M946.5 24.4h.01M699.4 38.0h.01M900.0 20.0h.01M835.8 33.7h.01M296.7 38.0h.01M352.1 56.3h.01M629.0 44.7h.01M693.8 29.6h.01M294.0 8.8h.01M1232.4 32.8h.01M696.3 32.7h.01M1080.9 14.8h.01M229.1 51.0h.01M611.7 39.7h.01M1099.7 55.4h.01M1153.3 2.7h.01M506.7 51.6h.01M1086.8 7.6h.01M204.5 15.6h.01M136.6 22.1h.01M1067.5 32.3h.01M601.8 5.5h.01M525.7 61.8h.01M923.7 27.9h.01M635.7 49.5h.01M1008.4 9.3h.01M904.0 22.7h.01M692.0 14.7h.01M492.8 21.1h.01M506.5 1.1h.01M266.9 35.4h.01M76.7 11.1h.01M954.5 17.0h.01M430.6 15.0h.01M1108.6 5.7h.01M845.4 53.3h.01M268.0 26.2h.01M1053.0 38.3h.01M493.9 2.7h.01M588.1 22.8h.01M947.0 18.3h.01M542.1 40.2h.01M1077.6 21.8h.01M512.1 35.9h.01M1229.1 11.9h.01M1291.0 44.1h.01M494.9 41.3h.01M437.8 4.4h.01M1004.8 23.5h.01M698.8 30.8h.01M1197.8 46.9h.01M34.0 36.8h.01M614.7 28.7h.01M1115.8 25.7h.01M629.4 55.2h.01M584.5 30.5h.01M680.2 51.1h.01M890.9 45.9h.01M533.8 2.5h.01M903.5 34.3h.01M1022.3 47.7h.01M157.0 13.7h.01M102.5 50.7h.01M135.2 5.5h.01M1001.2 35.0h.01M73.1 42.2h.01M945.0 29.9h.01M72.8 42.8h.01M555.4 36.2h.01M1326.5 50.6h.01M1158.8 9.0h.01M444.3 32.1h.01M8.0 61.3h.01M365.0 16.3h.01M416.0 15.8h.01M1141.4 34.5h.01M679.1 26.1h.01M68.0 18.9h.01M1151.9 49.7h.01M1138.5 15.9h.01M268.5 3.2h.01M713.5 23.2h.01M617.0 30.3h.01M775.8 22.7h.01M1065.1 12.4h.01M1221.9 34.5h.01M68.0 19.5h.01M708.5 25.4h.01M750.8 20.1h.01M363.6 49.4h.01M387.4 44.1h.01M1066.5 36.7h.01M604.2 58.0h.01M591.2 54.4h.01M76.7 26.9h.01M849.6 3.0h.01M1146.4 4.5h.01M792.5 11.2h.01M1225.9 34.8h.01M1064.1 30.9h.01M895.5 41.8h.01M391.9 13.1h.01M1114.1 9.0h.01M1219.8 12.8h.01M134.0 5.9h.01M1042.3 59.0h.01M551.1 40.9h.01M342.3 56.2h.01M911.6 9.6h.01M75.3 43.1h.01M55.5 51.8h.01M390.2 14.4h.01M773.6 19.8h.01M745.0 9.5h.01M1211.9 20.1h.01M1118.1 9.4h.01M1062.4 60.8h.01M520.3 2.0h.01M505.0 39.7h.01M296.9 33.8h.01M124.4 28.8h.01M967.8 26.7h.01M902.3 7.1h.01M1101.1 7.6h.01M1227.1 61.8h.01M1248.5 32.6h.01M386.4 21.6h.01M997.2 30.8h.01M1235.7 5.8h.01M644.2 53.6h.01M794.4 33.5h.01M117.5 8.7h.01M360.4 55.4h.01M1123.5 14.1h.01M1228.8 2.0h.01M795.8 60.0h.01M457.6 58.6h.01M872.5 3.1h.01M442.7 27.9h.01M328.8 46.0h.01M237.7 48.8h.01M396.4 4.3h.01M743.1 5.9h.01M733.0 48.9h.01M791.5 28.6h.01M44.8 31.8h.01M129.2 40.1h.01M175.4 35.8h.01M469.0 23.2h.01M881.3 10.2h.01M225.5 58.4h.01M440.7 52.2h.01M1160.8 29.8h.01M198.1 5.8h.01M1168.3 7.3h.01M659.4 33.2h.01M156.3 29.0h.01M218.0 33.2h.01M673.5 22.7h.01M262.8 25.0h.01M270.4 7.9h.01M318.8 54.0h.01M666.9 55.2h.01M20.1 58.5h.01M649.1 49.0h.01M758.1 42.7h.01M304.7 46.5h.01M204.2 16.4h.01M41.1 24.4h.01M688.6 18.1h.01M1183.5 5.2h.01M768.8 14.5h.01M791.1 48.6h.01M944.6 3.9h.01M326.6 37.1h.01M1306.3 2.6h.01M821.7 42.9h.01M1082.7 21.2h.01M1077.2 28.6h.01M1223.8 0.7h.01M1249.7 25.5h.01M541.0 5.5h.01M325.4 45.5h.01M902.1 9.4h.01M457.6 8.7h.01M263.4 13.6h.01M440.0 60.5h.01M1325.4 49.1h.01" stroke="#6c7c9c" stroke-width="1.15" stroke-linecap="round" opacity="0.55" fill="none" filter="url(#sb)"/>
<path d="M637.6 30.8h.01M1035.6 56.3h.01M998.7 39.5h.01M264.5 38.8h.01M1124.0 48.8h.01M122.8 44.5h.01M464.1 10.1h.01M1283.5 41.7h.01M990.8 8.4h.01M1101.0 58.1h.01M1202.5 46.2h.01M1106.3 49.7h.01M784.6 27.0h.01M1096.7 48.6h.01M1157.3 18.5h.01M1277.1 33.0h.01M1257.2 7.2h.01M1287.1 48.8h.01M334.9 52.0h.01M308.4 12.3h.01M608.6 14.7h.01M654.7 56.3h.01M910.8 44.0h.01M521.0 48.6h.01M1054.8 42.3h.01M1251.5 51.2h.01M539.9 5.4h.01M867.1 51.8h.01M451.3 36.9h.01M1111.4 49.2h.01M6.0 30.3h.01M21.7 6.9h.01M1079.7 26.0h.01M803.7 28.4h.01M445.8 13.2h.01M470.1 52.4h.01M823.0 18.1h.01M116.9 16.8h.01M931.9 27.4h.01M878.5 50.0h.01M160.4 42.3h.01M55.2 51.0h.01M244.7 16.8h.01M1272.8 22.5h.01M298.0 55.2h.01M811.0 55.4h.01M524.1 31.0h.01M1270.2 31.4h.01M1313.8 11.7h.01M1103.9 10.1h.01M700.6 0.0h.01M233.0 58.6h.01M604.1 50.2h.01M333.3 21.8h.01M134.1 34.3h.01M1145.9 31.9h.01M500.6 57.6h.01M1187.9 41.3h.01M100.9 38.7h.01M590.2 59.4h.01M480.9 41.0h.01M839.8 23.3h.01M694.0 41.9h.01M1205.7 30.9h.01M483.4 60.5h.01M75.7 51.8h.01M908.4 34.6h.01M595.0 46.6h.01M1184.3 45.2h.01M996.5 2.2h.01M432.2 8.5h.01M1266.5 55.3h.01M192.1 36.4h.01M766.5 2.9h.01M521.3 46.3h.01M852.5 17.4h.01M1013.3 18.1h.01M723.4 26.1h.01M1300.0 40.2h.01M1069.7 41.9h.01M505.7 59.7h.01M943.2 42.8h.01M368.8 10.0h.01M764.4 51.2h.01M1054.8 21.5h.01M185.9 32.0h.01M1166.1 10.1h.01M981.3 10.6h.01M414.6 3.3h.01M395.6 23.7h.01M1285.0 59.7h.01M248.7 19.2h.01M1254.2 12.2h.01M426.5 27.2h.01M144.1 16.1h.01M523.6 23.9h.01M1280.6 16.5h.01M271.1 56.3h.01M598.4 51.9h.01M846.7 48.3h.01M418.3 9.4h.01M1006.2 29.2h.01M742.6 41.6h.01M1000.2 17.1h.01M482.1 56.9h.01M703.5 17.9h.01M837.5 16.1h.01M1025.1 2.6h.01M1098.6 35.1h.01M470.0 58.3h.01M352.9 15.1h.01M92.9 34.0h.01M1001.7 42.0h.01M548.5 50.1h.01M147.9 19.0h.01M856.9 60.0h.01M842.5 42.9h.01M1029.5 24.5h.01M1249.7 46.0h.01M454.2 24.3h.01M1070.8 21.7h.01M246.8 54.0h.01M706.8 32.3h.01M889.6 55.9h.01M177.5 21.0h.01M87.6 25.6h.01M667.3 52.8h.01M887.5 35.8h.01M536.5 35.6h.01M363.9 52.4h.01M1047.9 52.0h.01M200.9 41.6h.01M1002.2 31.0h.01M1193.9 55.7h.01M987.5 50.9h.01M862.3 54.5h.01M174.5 43.7h.01M935.3 38.0h.01M365.6 4.2h.01M801.9 51.1h.01M362.9 13.2h.01M297.5 5.8h.01M898.4 60.4h.01M1066.0 22.3h.01M929.6 4.5h.01M1114.5 20.2h.01M4.6 39.0h.01M184.4 17.1h.01M78.5 27.6h.01M737.5 50.1h.01M52.6 51.3h.01M146.9 13.9h.01M836.5 21.1h.01M439.9 35.2h.01M289.5 49.2h.01M277.7 52.0h.01M1074.8 33.3h.01M40.5 48.2h.01M37.7 31.3h.01M563.4 3.9h.01M837.3 44.9h.01M777.4 24.8h.01M680.6 36.5h.01M300.7 53.8h.01M1323.3 49.9h.01M1277.6 20.4h.01M1310.7 4.4h.01M635.1 8.3h.01M603.3 42.3h.01M941.5 28.2h.01M454.1 11.8h.01M535.4 17.5h.01M258.1 45.6h.01M686.0 27.2h.01M262.7 43.6h.01M261.5 16.5h.01M744.6 43.5h.01M1293.1 46.4h.01M1260.3 57.0h.01M960.2 44.6h.01M83.4 12.7h.01M17.3 53.5h.01M959.5 39.1h.01M350.6 22.0h.01M217.5 39.2h.01M1317.7 19.0h.01M58.8 10.9h.01M472.1 55.7h.01M1069.2 28.2h.01M135.8 6.6h.01M204.5 48.2h.01M626.3 61.4h.01M1211.7 49.3h.01M632.9 51.0h.01M170.5 6.7h.01M748.8 31.5h.01M278.1 15.6h.01M28.2 56.3h.01M943.9 58.6h.01M1303.2 27.1h.01M973.4 23.8h.01M1079.0 52.2h.01M177.9 0.8h.01M284.4 36.3h.01M503.6 0.6h.01M1103.5 48.7h.01M616.3 2.7h.01M1181.5 33.1h.01M94.3 20.0h.01M830.1 54.9h.01M643.9 39.6h.01M273.4 15.1h.01M1203.8 23.7h.01M138.2 36.7h.01M167.8 12.4h.01M606.6 36.3h.01M845.7 43.8h.01M584.3 4.2h.01M962.8 3.3h.01M625.5 24.8h.01M894.3 44.3h.01M318.7 40.3h.01M919.7 29.2h.01M188.4 56.4h.01M796.2 3.9h.01M317.1 61.2h.01M304.0 24.3h.01M1047.3 51.1h.01M842.5 46.0h.01M50.9 5.8h.01M1297.3 49.8h.01M50.6 3.0h.01M319.6 57.7h.01M291.8 41.7h.01M1236.4 39.6h.01M1221.7 16.3h.01M203.9 1.1h.01M1006.2 6.4h.01M1293.3 44.0h.01M248.4 50.0h.01M216.4 31.8h.01M140.6 48.8h.01M1182.4 56.8h.01M3.0 52.8h.01M738.8 50.9h.01M667.8 38.4h.01M790.2 49.6h.01M103.2 3.4h.01M724.9 18.0h.01M527.6 0.5h.01M990.1 1.5h.01M1102.6 50.3h.01M608.7 7.6h.01M863.9 12.8h.01M570.2 6.8h.01M1297.7 33.9h.01M468.5 5.8h.01M970.4 52.7h.01M1127.4 6.3h.01M488.5 18.8h.01M1013.3 9.2h.01M805.9 60.7h.01M1021.7 0.4h.01M99.7 7.0h.01M920.3 37.1h.01M691.2 28.2h.01M541.4 37.9h.01M862.0 56.8h.01M973.7 49.4h.01M1213.2 51.9h.01M952.5 1.9h.01M904.9 52.7h.01M572.5 54.4h.01M239.0 58.5h.01M587.1 43.8h.01M335.8 18.6h.01M463.1 20.1h.01M125.9 27.5h.01M1303.6 40.5h.01M1238.9 47.3h.01M1112.1 61.6h.01M1000.3 17.0h.01M331.9 25.6h.01M27.8 14.3h.01M1177.9 57.1h.01M436.9 47.8h.01M1029.9 55.2h.01M1056.0 33.0h.01M139.4 51.2h.01M416.9 38.9h.01M487.9 33.3h.01M1283.3 10.0h.01M705.6 40.3h.01M715.5 58.2h.01M541.6 56.7h.01M916.7 60.0h.01M119.1 13.2h.01M381.9 56.2h.01M18.1 16.1h.01M951.3 61.4h.01M234.3 27.2h.01M912.9 42.8h.01M991.5 46.7h.01M330.2 15.9h.01M36.8 42.9h.01M278.0 16.1h.01M1281.6 39.9h.01M785.6 40.7h.01M794.6 43.1h.01M403.9 4.0h.01M88.9 0.9h.01M480.4 8.8h.01M150.0 30.6h.01M1288.5 42.6h.01M363.4 47.7h.01M236.4 6.2h.01M402.9 25.4h.01M916.4 27.6h.01M967.9 5.9h.01M1239.0 21.2h.01M1106.1 1.9h.01M1101.4 14.0h.01M1136.3 49.8h.01M891.4 17.2h.01M13.0 11.8h.01M1202.6 9.8h.01M876.1 36.4h.01M878.8 11.2h.01M190.9 6.0h.01M1306.0 23.7h.01M866.8 35.3h.01M296.7 4.0h.01M19.7 52.9h.01M172.9 59.7h.01M483.3 44.8h.01M183.9 48.9h.01M334.4 22.7h.01M695.1 6.9h.01M330.0 49.3h.01M379.1 23.6h.01M1016.4 13.9h.01M257.7 13.6h.01M510.6 22.7h.01M852.5 29.3h.01M1155.8 3.1h.01M882.0 51.9h.01M312.1 1.8h.01M582.6 7.2h.01M611.3 44.1h.01M124.6 7.3h.01M637.3 10.8h.01M306.7 27.3h.01M157.2 4.2h.01M480.0 29.1h.01M1244.7 34.4h.01M95.0 13.8h.01M989.1 34.9h.01M1156.5 59.7h.01M1140.2 6.8h.01M1254.2 32.5h.01M318.6 10.6h.01M1149.1 13.2h.01M110.4 16.4h.01M1228.1 28.6h.01M971.9 4.6h.01M602.1 19.7h.01M272.9 41.1h.01M480.1 7.4h.01M1308.0 29.9h.01M239.2 0.7h.01M867.8 31.9h.01M32.5 29.2h.01M984.1 33.3h.01M311.1 30.9h.01M803.9 40.4h.01M192.8 49.8h.01M1256.7 45.9h.01M1139.4 22.8h.01M1199.7 11.3h.01M301.5 37.1h.01M1198.2 5.1h.01M288.4 2.2h.01M583.5 8.7h.01M254.5 46.4h.01M775.2 58.2h.01M534.2 42.1h.01M16.8 58.8h.01M309.8 29.6h.01M680.0 58.8h.01M654.0 61.5h.01M825.6 13.4h.01M1108.3 12.5h.01M1328.4 28.3h.01M300.7 59.6h.01M427.7 25.2h.01M456.1 41.5h.01M30.5 23.2h.01M215.4 51.3h.01M0.2 37.7h.01M342.7 28.2h.01M746.7 44.1h.01M183.0 14.9h.01M160.2 59.5h.01M198.2 8.5h.01M694.0 36.0h.01M1178.2 3.5h.01M311.4 10.4h.01M778.2 28.0h.01M543.5 55.1h.01M879.4 53.3h.01M1271.8 16.7h.01M1251.9 25.3h.01M68.6 56.7h.01M138.4 1.1h.01M384.9 17.9h.01M1285.0 54.0h.01M558.3 32.8h.01M1128.1 50.0h.01M868.4 31.8h.01M155.0 15.1h.01M874.6 36.4h.01M1064.6 55.7h.01M1279.0 11.9h.01M101.0 55.6h.01M757.9 11.3h.01M919.8 15.9h.01M314.4 22.7h.01M696.2 42.0h.01M97.6 46.0h.01M829.6 29.2h.01M893.2 49.6h.01M12.8 29.5h.01M901.0 44.0h.01M860.6 11.2h.01M1273.8 48.7h.01M309.5 26.7h.01M1273.1 12.8h.01M543.7 59.6h.01M1196.2 14.4h.01M977.2 22.3h.01M881.6 47.5h.01M169.5 13.8h.01M285.7 16.5h.01M47.4 8.4h.01M539.8 26.1h.01M103.4 36.1h.01M1252.4 35.8h.01M472.7 43.7h.01M581.1 10.9h.01M640.2 1.1h.01M898.4 10.0h.01M491.3 59.7h.01M1019.0 51.8h.01M853.3 39.3h.01M936.8 59.9h.01M260.9 47.5h.01M399.8 15.9h.01M1091.9 37.3h.01M1129.2 54.3h.01M782.5 12.3h.01M19.9 33.2h.01M964.4 16.9h.01M93.1 0.3h.01M230.2 43.1h.01M5.2 14.3h.01M352.4 44.1h.01M1312.0 1.2h.01M151.8 57.9h.01M1289.1 9.2h.01M445.7 32.4h.01M425.5 25.9h.01M636.4 16.0h.01M73.1 5.2h.01M215.9 5.7h.01M829.4 43.2h.01M349.5 49.1h.01M968.5 21.2h.01M653.6 11.7h.01M1234.6 34.7h.01M68.1 9.5h.01M920.5 23.9h.01M952.9 14.2h.01M1059.4 49.7h.01M125.2 36.3h.01M254.2 43.9h.01M1068.5 49.1h.01M307.3 5.8h.01M881.7 35.0h.01M183.7 11.9h.01M774.1 6.7h.01M842.5 14.9h.01M343.6 26.3h.01M708.6 44.9h.01M41.1 44.9h.01M293.7 18.0h.01M850.3 42.9h.01M817.0 55.9h.01M272.0 19.3h.01M880.5 16.2h.01M209.1 14.0h.01M1025.1 51.3h.01M951.9 59.4h.01M1055.7 19.2h.01M419.2 44.7h.01M74.0 37.8h.01M118.5 3.0h.01M682.8 9.4h.01M1238.2 54.4h.01M613.7 12.3h.01M158.9 31.4h.01M692.8 22.5h.01M952.0 32.8h.01M1030.5 6.6h.01M93.1 24.0h.01M642.6 15.7h.01M888.5 13.8h.01M422.9 29.6h.01M946.7 47.8h.01M493.9 27.7h.01M1232.7 57.9h.01M822.3 6.5h.01M605.7 39.5h.01M370.2 2.3h.01M1304.0 56.4h.01M171.4 28.9h.01M823.1 18.6h.01M91.1 46.5h.01M1024.3 27.1h.01M113.9 24.4h.01M125.0 59.7h.01M68.1 17.9h.01M1020.6 8.4h.01M141.6 4.4h.01M217.9 33.0h.01M1107.2 10.5h.01M230.8 47.4h.01M565.9 21.0h.01M163.8 15.1h.01M1291.5 7.3h.01M345.0 45.9h.01M1185.1 56.1h.01M628.3 59.3h.01M802.8 17.9h.01M618.3 44.4h.01M975.5 8.0h.01M257.4 59.4h.01M142.2 50.4h.01M450.3 15.4h.01M339.1 29.1h.01M1316.5 9.2h.01M1135.7 19.9h.01M229.7 46.2h.01M454.0 11.6h.01M556.1 50.9h.01M1147.0 35.6h.01M13.8 47.3h.01M806.1 55.8h.01M1265.2 20.3h.01M1127.6 50.8h.01M353.5 22.7h.01M497.9 21.9h.01M502.7 6.8h.01M301.9 56.4h.01M545.7 39.4h.01M1179.2 46.8h.01M324.8 57.0h.01M1068.7 61.4h.01M967.6 46.8h.01M1080.5 15.7h.01M871.7 23.6h.01M1116.0 8.3h.01M716.5 20.9h.01M1090.6 21.4h.01M1121.5 52.6h.01M1168.0 8.6h.01M1246.9 46.1h.01M899.6 40.5h.01M63.8 53.9h.01M728.0 28.3h.01M450.9 48.5h.01M1039.6 53.9h.01M284.6 21.1h.01M331.4 6.2h.01M434.8 1.6h.01M1058.6 14.1h.01M93.9 4.2h.01M984.9 12.3h.01M614.1 24.9h.01M1066.4 59.2h.01M411.8 39.2h.01M1189.1 29.2h.01M1195.7 45.5h.01M414.0 54.2h.01M761.9 6.6h.01M780.8 51.4h.01M689.1 30.0h.01M553.4 54.6h.01M884.5 12.9h.01M481.6 22.5h.01M1274.1 43.1h.01M165.9 56.7h.01M46.4 36.6h.01M574.6 44.5h.01M570.6 5.7h.01M696.0 50.9h.01M1048.4 22.1h.01M295.5 46.2h.01M1065.5 13.6h.01M1173.7 61.5h.01M576.1 23.6h.01M943.4 57.6h.01M268.1 18.7h.01M437.3 45.4h.01M248.3 33.9h.01M664.9 41.4h.01M190.4 59.3h.01M1328.9 34.8h.01M1056.8 11.4h.01M1209.6 34.2h.01M1009.4 53.8h.01M480.7 57.3h.01M275.6 1.5h.01M667.7 55.7h.01M1196.7 59.2h.01M678.9 57.8h.01M744.2 8.9h.01M838.7 49.8h.01M563.3 37.3h.01M344.4 17.1h.01M558.5 31.8h.01M622.4 5.7h.01M7.5 21.1h.01M952.8 46.4h.01M315.0 15.8h.01M686.7 10.9h.01M801.3 56.1h.01M268.5 36.3h.01M957.9 46.5h.01M946.4 44.1h.01M362.2 52.0h.01M1229.5 3.3h.01M1254.7 27.4h.01M114.7 4.3h.01M1059.0 42.0h.01M188.9 28.5h.01M848.8 61.9h.01M446.6 47.5h.01M325.8 12.3h.01M214.3 25.4h.01M821.6 18.8h.01M215.2 13.5h.01M112.9 12.0h.01M419.7 31.3h.01M244.0 29.7h.01M584.5 60.3h.01M646.2 58.6h.01M626.5 12.3h.01M786.7 9.0h.01M224.9 4.5h.01M932.1 60.0h.01M536.1 22.0h.01M565.0 21.8h.01M917.9 24.3h.01M202.4 53.6h.01M760.9 0.4h.01M1129.0 45.2h.01M471.1 39.1h.01M1223.0 24.9h.01M574.9 18.5h.01M736.6 41.1h.01M976.9 58.9h.01M193.1 22.7h.01M1131.7 49.0h.01M784.1 42.0h.01M451.9 58.6h.01M730.1 25.0h.01M242.4 7.2h.01M1192.8 49.6h.01M35.5 20.0h.01M637.4 30.7h.01M483.0 55.5h.01M464.9 33.0h.01M1235.2 39.6h.01M633.8 20.6h.01M514.5 37.8h.01M1044.5 16.2h.01M492.4 24.0h.01M482.2 56.6h.01M716.3 17.1h.01M441.7 50.9h.01M212.9 42.8h.01M28.9 12.0h.01M79.0 49.9h.01M195.2 14.1h.01M76.5 16.4h.01M974.7 44.6h.01M1209.8 58.7h.01M732.1 57.2h.01M119.1 57.4h.01M576.8 12.0h.01M994.2 53.2h.01M512.7 5.8h.01M1160.1 46.7h.01M793.4 60.6h.01M50.6 3.5h.01M165.1 1.4h.01M941.3 39.1h.01M149.3 10.0h.01M240.4 37.8h.01M893.7 60.1h.01M479.3 60.7h.01M577.4 24.2h.01M336.7 14.4h.01M1295.3 61.7h.01M938.1 10.9h.01M239.1 9.4h.01M466.5 45.7h.01M78.3 32.9h.01M904.7 2.1h.01M584.2 49.0h.01M765.1 28.0h.01M1171.3 37.3h.01M447.8 24.5h.01M1253.7 53.3h.01M1215.8 34.8h.01M189.3 10.9h.01M509.4 42.8h.01M6.1 49.7h.01M1044.6 31.9h.01M7.5 49.5h.01M550.3 41.5h.01M757.4 45.2h.01M543.3 59.5h.01M1269.9 57.6h.01M817.6 19.6h.01M500.5 16.7h.01M1201.1 49.1h.01M1047.4 50.9h.01M1316.8 42.7h.01M423.0 47.0h.01M348.6 37.9h.01M210.6 53.2h.01M649.5 17.1h.01M1226.5 5.1h.01M1236.3 46.9h.01M198.1 47.2h.01M762.0 56.2h.01M779.5 26.5h.01M1240.4 5.4h.01M1032.7 6.4h.01M367.6 7.0h.01M1157.9 27.4h.01M965.4 15.9h.01M970.6 40.2h.01M129.7 30.6h.01M959.3 13.3h.01M869.6 17.2h.01M492.4 57.0h.01M1253.4 61.9h.01M567.2 35.4h.01M1074.5 47.0h.01M606.3 53.5h.01M533.3 58.9h.01M628.3 7.4h.01M995.6 9.0h.01M903.1 3.3h.01M1313.4 33.5h.01M984.0 8.1h.01M846.4 23.3h.01M331.1 50.5h.01M44.2 29.6h.01M115.5 52.8h.01M1187.1 2.1h.01M617.4 29.1h.01M955.1 45.2h.01M456.1 57.8h.01M246.3 8.5h.01M1082.7 7.4h.01M247.1 31.0h.01M447.0 10.2h.01M1235.9 29.4h.01M1044.4 15.5h.01M1212.9 13.7h.01M1204.7 38.0h.01M1290.5 47.8h.01M838.4 33.0h.01M1136.1 27.5h.01M130.7 56.7h.01M1070.6 42.3h.01M989.7 14.4h.01M615.8 51.0h.01M1278.5 57.2h.01M213.3 42.4h.01M736.4 25.1h.01M222.9 8.5h.01M625.0 30.6h.01M356.0 22.8h.01M736.3 47.2h.01M783.3 10.1h.01M1177.6 22.8h.01M1275.5 60.9h.01M186.5 36.1h.01M1284.9 23.9h.01M727.6 19.5h.01M38.1 12.7h.01M164.8 17.6h.01M836.6 34.9h.01M1260.2 42.5h.01M481.5 58.9h.01M842.6 33.7h.01M1146.3 41.5h.01M478.9 37.5h.01M399.1 60.1h.01M324.6 60.3h.01M85.6 0.6h.01M735.1 12.8h.01M674.4 7.3h.01M1112.2 41.5h.01M909.3 57.5h.01M1318.5 42.0h.01M947.8 0.1h.01M65.4 26.4h.01M1287.9 19.4h.01M755.5 0.5h.01M552.5 56.0h.01M783.5 51.1h.01M17.4 12.6h.01M238.2 51.6h.01M135.1 57.8h.01M355.4 54.6h.01M685.2 20.1h.01M1284.4 25.1h.01M926.9 4.2h.01M1103.6 60.8h.01M146.9 46.3h.01M359.4 9.2h.01M484.1 41.0h.01M1267.3 61.6h.01M1320.5 38.6h.01M868.4 10.0h.01M964.9 34.2h.01M477.1 55.8h.01M339.0 8.8h.01M210.2 9.3h.01M782.2 49.7h.01M212.7 31.2h.01M763.4 34.7h.01M548.5 33.7h.01M20.1 3.6h.01M561.7 14.7h.01M1005.8 15.0h.01M1095.1 15.0h.01M123.0 29.6h.01M515.0 20.8h.01M1016.8 13.8h.01M890.4 51.8h.01M601.5 31.2h.01M1227.5 37.5h.01M240.4 4.3h.01M109.2 20.6h.01M118.1 40.2h.01M563.0 19.1h.01M680.7 58.1h.01M324.8 9.6h.01M405.8 20.1h.01M1209.3 43.8h.01M569.9 10.3h.01M60.4 7.6h.01M1126.3 40.2h.01M208.1 38.8h.01M77.6 31.4h.01M445.7 6.4h.01M986.8 44.4h.01M678.6 10.4h.01M889.9 26.9h.01M878.8 5.7h.01M1199.6 0.2h.01M296.0 24.7h.01M263.7 5.4h.01M913.6 61.6h.01M445.2 16.5h.01M891.3 13.8h.01M532.6 42.7h.01M572.4 9.7h.01M93.6 33.7h.01M1316.5 57.0h.01M132.7 31.1h.01M649.1 12.0h.01M890.2 30.7h.01M1074.9 18.1h.01M1241.1 50.5h.01M629.3 8.8h.01M642.8 7.9h.01M911.3 43.2h.01M768.3 60.5h.01M60.1 44.3h.01M1064.4 7.0h.01M428.0 3.3h.01M774.8 44.8h.01M462.5 43.1h.01M487.4 44.2h.01M368.0 60.6h.01M582.0 0.2h.01M121.6 45.0h.01M1149.2 39.5h.01M206.5 54.1h.01M952.7 7.1h.01M505.8 41.6h.01M4.8 2.6h.01M470.0 54.2h.01M1324.2 19.7h.01M1207.9 48.7h.01M1149.7 36.5h.01M1288.3 39.9h.01M1259.7 35.1h.01M261.2 32.2h.01M641.9 20.9h.01M496.6 31.7h.01M781.5 13.8h.01M368.7 31.2h.01M669.7 26.0h.01M882.7 11.5h.01M706.8 17.1h.01M1023.4 43.6h.01M1038.0 32.1h.01M330.9 57.4h.01M678.9 23.3h.01M385.9 24.9h.01M941.8 50.8h.01M641.3 45.3h.01M283.0 28.0h.01M475.7 19.0h.01M477.7 46.8h.01M974.6 12.9h.01M310.7 48.6h.01M870.0 41.9h.01M844.2 43.0h.01M362.5 3.8h.01M479.3 2.0h.01M1278.5 32.5h.01M890.7 59.9h.01M1069.1 14.2h.01M447.8 6.7h.01M1057.4 45.7h.01M648.1 22.9h.01M358.6 30.2h.01M946.3 55.5h.01M1128.1 53.8h.01M583.8 26.1h.01M417.4 60.4h.01M243.7 9.8h.01M373.4 57.2h.01M1133.3 20.6h.01M1131.9 55.2h.01M567.8 11.9h.01M1027.0 23.2h.01M158.6 56.0h.01M584.1 24.6h.01M791.1 15.8h.01M26.9 24.2h.01M504.1 0.7h.01M494.1 47.2h.01M442.5 42.1h.01M830.0 11.7h.01M27.1 41.8h.01M812.0 18.2h.01M266.1 53.0h.01M1208.4 14.5h.01M778.8 35.6h.01M427.9 2.3h.01M432.4 40.0h.01M800.0 31.6h.01M162.6 13.2h.01M413.8 25.8h.01M482.7 55.9h.01M154.2 61.2h.01M319.5 53.1h.01M323.7 36.4h.01M501.3 2.4h.01M1058.4 50.2h.01M357.7 48.1h.01M636.8 61.2h.01M72.3 23.6h.01M302.8 38.7h.01M1033.9 52.2h.01M728.8 24.0h.01M1062.7 6.5h.01M345.5 46.7h.01M585.3 61.6h.01M120.9 28.6h.01M282.4 0.1h.01M124.3 5.6h.01M490.3 26.8h.01M674.9 17.9h.01M932.9 32.0h.01M1304.8 10.5h.01M678.6 30.6h.01M494.1 53.4h.01M278.4 54.4h.01M475.5 20.8h.01M817.1 34.9h.01M377.4 5.2h.01M1269.5 22.9h.01M152.0 40.7h.01M707.0 20.3h.01M436.5 52.4h.01M450.0 25.9h.01M1271.7 22.4h.01M534.3 10.0h.01M880.4 41.2h.01M593.2 25.2h.01M309.3 49.0h.01M607.7 51.6h.01M498.3 45.5h.01M38.2 13.6h.01M1276.6 42.3h.01M898.0 30.8h.01M627.7 12.2h.01M229.9 40.0h.01M922.1 16.0h.01M856.6 8.4h.01M814.7 10.6h.01M677.2 19.5h.01M731.8 8.3h.01M642.4 38.2h.01M179.1 19.1h.01M901.9 33.9h.01M819.6 48.4h.01M759.5 13.8h.01M588.1 51.5h.01M753.1 46.7h.01M483.8 27.8h.01M1288.9 51.0h.01M867.6 6.6h.01M813.2 2.1h.01M1241.2 60.3h.01M967.6 16.6h.01M1124.1 11.0h.01M1100.2 32.3h.01M20.9 55.2h.01M584.8 51.5h.01M915.0 33.0h.01M1146.2 12.6h.01M1194.2 21.0h.01M34.6 20.9h.01M87.8 4.5h.01M829.5 7.5h.01M212.2 18.1h.01M370.5 57.0h.01M1203.3 53.9h.01M1315.5 27.3h.01M1057.6 17.4h.01M1231.3 50.3h.01M973.0 14.1h.01M121.6 57.4h.01M733.8 38.0h.01M1145.6 8.9h.01M929.4 28.8h.01M1044.7 28.3h.01M261.4 59.3h.01M373.7 46.2h.01M1104.7 15.4h.01M923.7 24.6h.01M297.8 13.5h.01M1267.9 22.8h.01M677.6 31.1h.01M35.3 46.7h.01M990.3 54.3h.01M474.4 13.0h.01M461.7 45.4h.01M874.5 25.2h.01M697.3 9.6h.01M1220.7 29.3h.01M673.5 48.8h.01M263.0 44.8h.01M469.5 50.4h.01M125.4 17.1h.01M844.7 29.9h.01M500.9 35.9h.01M289.4 27.1h.01M2.5 49.5h.01M337.5 51.5h.01M733.8 37.3h.01M832.0 7.8h.01M1032.9 18.1h.01M1146.6 48.8h.01M901.3 50.5h.01M580.3 41.7h.01M1266.3 11.7h.01M133.9 25.5h.01M677.2 9.2h.01M294.0 53.7h.01M515.6 9.2h.01M243.2 35.8h.01M252.4 29.5h.01M714.6 27.3h.01M669.4 51.9h.01M22.2 57.7h.01M264.8 2.4h.01M1020.1 35.3h.01M714.9 13.5h.01M1038.0 19.0h.01M966.1 14.2h.01M761.3 40.2h.01M493.9 29.8h.01M86.7 39.9h.01M918.7 9.5h.01M731.9 45.5h.01M134.4 52.0h.01M1156.8 3.1h.01M330.1 5.2h.01M335.8 5.3h.01M650.4 15.5h.01M398.9 28.6h.01M493.8 48.9h.01M960.5 7.1h.01M297.0 0.5h.01M437.6 6.7h.01M926.5 48.4h.01M1323.4 13.0h.01M48.7 46.9h.01M547.2 57.7h.01M521.6 19.4h.01M96.6 58.8h.01M680.6 27.3h.01M580.9 47.7h.01M1104.2 29.5h.01M236.8 25.2h.01M1184.6 25.3h.01M878.4 34.7h.01M613.1 35.6h.01M325.8 34.6h.01M1149.2 5.0h.01M490.3 54.6h.01M1300.1 0.8h.01M833.3 39.2h.01M1120.5 29.1h.01M174.1 18.6h.01M947.2 45.2h.01M271.9 39.8h.01M872.8 40.8h.01M29.1 27.4h.01M431.9 37.0h.01M447.5 7.9h.01M890.9 17.8h.01M1050.8 19.0h.01M725.4 50.1h.01M153.6 45.3h.01M90.6 58.0h.01M33.4 44.9h.01M490.0 11.1h.01M524.9 31.1h.01M551.4 7.6h.01M694.8 18.6h.01M1285.5 23.8h.01M578.5 14.1h.01M1287.5 19.9h.01M858.9 51.6h.01M522.5 46.8h.01M370.5 6.8h.01M56.1 27.8h.01M1161.5 12.6h.01M585.4 47.3h.01M367.0 9.5h.01M690.1 26.4h.01M1247.3 55.6h.01M316.4 34.8h.01M553.2 2.1h.01M590.5 56.8h.01M402.4 36.3h.01M944.0 3.9h.01M1228.2 6.8h.01M400.7 44.4h.01M25.7 23.3h.01M168.3 29.3h.01M21.0 9.4h.01M295.6 5.1h.01M120.3 12.1h.01M688.0 8.5h.01M1091.3 25.8h.01M334.7 14.9h.01M1115.8 2.9h.01M986.4 6.1h.01M1255.3 25.3h.01M794.3 53.5h.01M133.5 4.0h.01M921.7 36.4h.01M958.2 17.2h.01M660.4 11.6h.01M580.9 17.5h.01M778.4 18.5h.01M365.2 39.8h.01M113.7 49.7h.01M658.9 14.2h.01M152.7 31.5h.01M669.7 44.6h.01M496.9 25.6h.01M1186.2 17.0h.01M1303.8 55.3h.01M1316.0 58.5h.01" stroke="#7585a6" stroke-width="1.35" stroke-linecap="round" opacity="0.62" fill="none" filter="url(#sb)"/>
<path d="M341.8 50.5h.01M813.2 12.6h.01M1325.7 40.2h.01M1076.1 34.6h.01M105.7 53.5h.01M233.2 16.1h.01M818.9 12.0h.01M614.7 44.2h.01M127.6 41.0h.01M138.9 29.5h.01M863.1 42.6h.01M57.3 11.8h.01M1276.1 24.2h.01M564.6 23.2h.01M925.2 45.9h.01M864.1 24.9h.01M756.9 32.0h.01M249.7 58.9h.01M1282.3 48.2h.01M1319.1 28.9h.01M1115.2 14.9h.01M987.1 44.3h.01M1247.4 51.7h.01M1168.6 16.6h.01M1046.5 29.5h.01M415.3 22.8h.01M1061.7 52.3h.01M1122.5 41.5h.01M226.3 9.7h.01M754.9 13.1h.01M447.3 6.4h.01M205.7 44.5h.01M297.2 52.6h.01M437.4 52.6h.01M402.2 16.6h.01M524.7 0.7h.01M578.8 23.6h.01M16.8 53.4h.01M498.6 0.0h.01M1276.3 14.2h.01M336.2 1.5h.01M132.3 44.0h.01M773.5 31.3h.01M327.2 17.8h.01M1289.2 23.1h.01M1315.0 55.0h.01M165.6 52.6h.01M28.0 44.1h.01M1075.9 43.1h.01M730.7 50.4h.01M205.2 33.5h.01M353.3 24.7h.01M254.2 43.9h.01M761.7 48.3h.01M834.9 37.1h.01M1225.2 50.4h.01M753.2 20.2h.01M1233.1 23.0h.01M135.7 20.7h.01M938.8 57.7h.01M858.1 41.1h.01M1245.7 48.2h.01M592.0 28.6h.01M1009.6 19.7h.01M145.9 38.4h.01M1075.1 15.4h.01M908.6 55.3h.01M169.7 8.4h.01M655.2 20.7h.01M1261.8 61.8h.01M592.2 49.2h.01M839.6 10.8h.01M1291.5 10.8h.01M101.0 28.1h.01M23.7 29.8h.01M547.6 59.2h.01M549.7 52.7h.01M1036.3 36.3h.01M316.0 18.9h.01M653.2 24.5h.01M858.0 31.3h.01M429.3 37.6h.01M1324.4 12.6h.01M446.1 0.7h.01M124.6 3.4h.01M562.0 51.9h.01M927.3 59.9h.01M1112.3 36.3h.01M771.4 0.8h.01M509.7 16.2h.01M824.9 4.1h.01M720.7 23.3h.01M653.8 25.1h.01M135.8 45.4h.01M1063.7 37.1h.01M153.9 37.1h.01M1157.6 61.2h.01M1008.0 2.8h.01M1167.5 41.2h.01M367.5 57.0h.01M1097.9 55.5h.01M328.9 35.8h.01M503.5 18.4h.01M1011.7 38.2h.01M441.0 33.7h.01M1233.8 35.1h.01M1214.1 35.1h.01M1318.6 1.8h.01M611.3 34.2h.01M965.9 60.1h.01M828.4 29.6h.01M842.9 33.1h.01M936.9 58.7h.01M18.5 19.9h.01M1164.7 3.7h.01M1050.3 1.9h.01M861.4 49.6h.01M316.4 23.6h.01M300.9 43.7h.01M702.8 37.5h.01M432.6 36.4h.01M1268.5 48.3h.01M1264.9 15.3h.01M685.8 23.9h.01M459.9 49.8h.01M232.5 34.6h.01M1028.7 58.0h.01M24.7 16.8h.01M655.3 58.1h.01M216.9 52.1h.01M527.9 34.0h.01M1233.3 4.0h.01M437.9 9.7h.01M177.8 18.8h.01M931.3 36.0h.01M161.9 49.7h.01M674.2 8.9h.01M1090.4 50.9h.01M288.1 58.3h.01M1077.0 14.2h.01M1.3 53.8h.01M1097.8 6.1h.01M1018.6 47.9h.01M842.2 51.6h.01M1308.8 20.3h.01M1108.3 57.1h.01M416.7 42.4h.01M909.5 52.6h.01M753.4 17.1h.01M334.4 33.7h.01M179.9 53.3h.01M1181.8 15.0h.01M926.6 41.7h.01M161.9 48.3h.01M1018.4 19.0h.01M130.5 17.5h.01M1025.5 28.9h.01M1083.6 9.9h.01M141.6 21.6h.01M1169.3 10.0h.01M97.6 46.7h.01M121.4 41.4h.01M110.9 15.3h.01M881.9 54.2h.01M543.8 27.9h.01M41.3 21.1h.01M321.7 48.9h.01M949.2 48.6h.01M706.7 43.4h.01M169.1 23.9h.01M389.3 17.5h.01M982.4 13.3h.01M432.4 17.5h.01M1148.3 39.6h.01M638.8 23.6h.01M1224.8 58.2h.01M597.6 35.1h.01M1146.3 15.9h.01M343.7 6.4h.01M667.1 47.6h.01M208.0 26.8h.01M1316.6 29.8h.01M508.2 52.0h.01M1185.6 23.3h.01M164.1 39.5h.01M984.0 57.2h.01M877.2 19.1h.01M684.4 17.8h.01M592.7 29.0h.01M1212.3 56.2h.01M1231.1 29.6h.01M1281.7 8.6h.01M1224.1 39.7h.01M1159.5 25.6h.01M1316.9 1.6h.01M1126.8 50.8h.01M497.3 51.4h.01M283.9 46.7h.01M622.6 25.5h.01M261.2 49.6h.01M971.4 5.5h.01M1299.8 13.7h.01M498.7 25.7h.01M766.2 55.2h.01M1256.1 39.3h.01M485.8 6.7h.01M91.5 32.2h.01M775.1 27.7h.01M1305.7 25.6h.01M466.5 25.9h.01M228.3 58.2h.01M785.4 33.7h.01M565.9 15.5h.01M419.2 30.6h.01M593.1 60.7h.01M748.3 12.8h.01M71.4 9.9h.01M459.6 48.5h.01M1181.8 14.7h.01M1037.0 27.4h.01M714.3 33.0h.01M56.6 4.1h.01M887.2 42.7h.01M505.5 57.0h.01M1089.7 18.7h.01M89.0 34.3h.01M869.6 13.9h.01M58.3 30.2h.01M45.4 45.7h.01M831.3 17.3h.01M592.3 14.4h.01M247.1 11.2h.01M1084.0 28.1h.01M950.9 21.5h.01M1072.3 36.9h.01M869.2 24.3h.01M746.6 11.8h.01M1294.1 41.7h.01M707.7 39.6h.01M133.1 20.7h.01M306.5 52.3h.01M17.1 27.6h.01M1154.3 48.5h.01M955.3 18.7h.01M308.7 43.7h.01M396.9 44.8h.01M465.1 47.2h.01M761.6 50.6h.01M1309.9 23.5h.01M1311.1 0.6h.01M1165.9 1.8h.01M724.7 24.1h.01M1023.2 19.5h.01M276.7 48.6h.01M731.4 46.9h.01M650.3 2.3h.01M1024.9 13.5h.01M627.1 0.0h.01M344.2 41.3h.01M1015.6 39.5h.01M589.0 45.4h.01M888.9 12.8h.01M711.2 37.1h.01M968.5 12.3h.01M413.0 21.3h.01M127.5 21.6h.01M969.6 35.8h.01M229.9 45.4h.01M155.2 46.6h.01M196.3 6.0h.01M334.5 31.9h.01M358.9 54.8h.01M1247.1 17.6h.01M996.6 43.1h.01M745.8 15.8h.01M1262.0 59.3h.01M17.5 20.5h.01M426.6 12.3h.01M571.8 55.7h.01M31.7 51.8h.01M410.6 0.8h.01M1195.7 16.9h.01M281.9 7.2h.01M488.0 7.4h.01M238.8 15.5h.01M768.6 27.7h.01M405.4 32.6h.01M1028.8 44.9h.01M456.5 56.9h.01M1051.6 34.8h.01M632.0 20.4h.01M178.2 54.9h.01M808.5 6.1h.01M1230.0 55.0h.01M44.7 43.4h.01M316.6 33.2h.01M1108.7 21.7h.01M662.3 41.2h.01M255.6 38.8h.01M565.1 60.9h.01M249.4 44.1h.01M54.7 17.0h.01M156.5 9.2h.01M702.0 10.8h.01M1056.3 6.0h.01M828.0 53.4h.01M168.2 13.5h.01M1016.6 29.2h.01M1238.8 21.0h.01M528.9 59.4h.01M457.0 59.9h.01M1184.2 12.4h.01M725.4 58.4h.01M156.0 52.6h.01M1028.9 46.5h.01M798.4 6.2h.01M1273.7 6.3h.01M1041.4 44.8h.01M421.8 42.4h.01M545.7 46.5h.01M57.6 57.9h.01M510.9 49.8h.01M626.7 50.4h.01M400.2 33.8h.01M33.5 30.3h.01M105.2 53.3h.01M900.1 26.4h.01M1294.8 58.7h.01M1271.5 5.1h.01M935.8 45.1h.01M805.3 1.0h.01M1227.8 27.2h.01M790.8 50.5h.01M365.8 1.8h.01M1227.2 16.8h.01M54.7 8.5h.01M1322.1 45.9h.01M279.0 9.1h.01M1193.1 41.2h.01M774.8 8.1h.01M549.3 58.7h.01M4.4 26.0h.01M75.8 61.9h.01M138.7 59.1h.01M1118.0 45.4h.01M56.2 43.1h.01M655.2 30.5h.01M193.0 31.8h.01M1065.9 8.2h.01M1164.4 26.0h.01M353.7 14.8h.01M611.0 40.1h.01M757.3 55.2h.01M679.7 31.8h.01M1314.3 13.3h.01M22.0 20.4h.01M416.2 7.7h.01M555.7 2.1h.01M1223.8 30.0h.01M1167.9 43.2h.01M970.0 47.0h.01M400.9 45.2h.01M273.9 34.4h.01M791.2 48.1h.01M223.0 21.3h.01M1095.5 49.9h.01M1299.7 7.3h.01M279.3 6.6h.01M961.8 46.2h.01M861.3 48.3h.01M685.7 34.9h.01M1224.1 40.2h.01M871.8 36.5h.01M656.4 46.9h.01M761.0 8.0h.01M566.0 26.1h.01M574.5 34.8h.01M480.7 24.3h.01M567.3 23.0h.01M1291.6 5.6h.01M22.5 44.7h.01M525.2 27.8h.01M786.5 22.8h.01M317.9 1.0h.01M1161.3 58.2h.01M380.0 28.8h.01M430.4 3.6h.01M1186.3 51.9h.01M320.4 15.8h.01M927.9 49.4h.01M624.2 24.0h.01M310.4 49.5h.01M1147.6 53.2h.01M152.0 36.8h.01M1309.3 44.3h.01M610.3 9.0h.01M80.4 45.4h.01M91.2 50.2h.01M884.7 29.4h.01M1184.9 57.8h.01M819.5 6.2h.01M782.2 26.1h.01M331.7 57.6h.01M970.5 7.5h.01M304.3 21.2h.01M761.4 20.1h.01M584.2 50.4h.01M241.6 44.6h.01M439.4 58.6h.01M1264.9 20.3h.01M805.5 6.9h.01M545.5 38.6h.01M848.1 21.2h.01M45.1 7.7h.01M744.9 10.6h.01M406.8 38.3h.01M1197.1 31.9h.01M338.4 36.3h.01M366.3 48.5h.01M207.4 16.2h.01M582.9 56.3h.01M219.8 11.9h.01M175.0 13.2h.01M441.6 24.5h.01M1009.6 25.0h.01M631.4 24.6h.01M1028.9 56.0h.01M565.5 57.1h.01M333.1 60.6h.01M698.2 42.3h.01M506.8 16.8h.01M179.6 54.9h.01M477.9 43.3h.01M612.3 32.7h.01M274.9 11.0h.01M446.9 42.3h.01M722.1 0.1h.01M944.6 26.9h.01M91.6 16.1h.01M281.2 51.0h.01M731.0 20.3h.01M330.4 18.1h.01M372.3 21.5h.01M1050.8 48.9h.01M927.8 54.9h.01M869.1 7.0h.01M59.2 10.2h.01M343.0 32.8h.01M1092.5 36.3h.01M571.1 15.0h.01M1304.7 46.7h.01M453.5 2.9h.01M1305.0 15.9h.01M1126.6 7.3h.01M867.9 22.1h.01M1181.4 18.4h.01M133.9 12.3h.01M1070.8 60.7h.01M854.5 42.3h.01M374.9 16.9h.01M115.3 61.1h.01M57.7 38.0h.01M465.0 11.6h.01M579.5 57.7h.01M329.3 10.2h.01M836.5 40.7h.01M678.7 11.1h.01M1161.8 6.9h.01M231.4 15.0h.01M682.8 29.5h.01M735.8 45.1h.01M1188.2 29.0h.01M55.7 51.5h.01M24.5 19.7h.01M190.2 37.3h.01M1039.2 8.0h.01M391.2 52.8h.01M915.8 6.7h.01M912.3 49.2h.01M543.0 9.6h.01M875.8 19.8h.01M177.8 10.2h.01M534.9 7.9h.01M511.8 34.2h.01M733.8 25.0h.01M1063.4 5.4h.01M438.3 57.9h.01M1148.7 57.1h.01M1017.0 33.2h.01M1046.7 35.5h.01M156.2 15.8h.01M129.5 54.3h.01M428.0 25.3h.01M715.3 6.3h.01M938.0 49.3h.01M1058.0 54.6h.01M421.7 9.0h.01M1012.1 43.0h.01M493.8 21.3h.01M204.2 51.6h.01" stroke="#8494b4" stroke-width="1.65" stroke-linecap="round" opacity="0.68" fill="none" filter="url(#sb)"/>
<path d="M612.2 50.3h.01M451.5 19.9h.01M682.1 46.2h.01M1173.1 21.9h.01M921.6 25.0h.01M1144.9 47.1h.01M738.0 22.5h.01M363.8 54.9h.01M1064.4 18.9h.01M112.6 12.1h.01M1281.4 2.4h.01M1076.5 32.8h.01M736.2 33.4h.01M545.2 34.6h.01M119.6 57.0h.01M136.8 8.6h.01M893.8 39.7h.01M1072.1 42.9h.01M1236.9 3.2h.01M14.2 14.7h.01M1035.2 9.5h.01M706.0 47.8h.01M207.7 32.7h.01M1197.1 46.3h.01M528.9 29.7h.01M369.3 59.6h.01M1040.1 42.2h.01M404.3 45.4h.01M646.9 49.5h.01M483.6 54.7h.01M909.9 27.9h.01M747.9 49.9h.01M703.2 59.5h.01M9.6 55.6h.01M949.1 30.3h.01M1129.5 9.2h.01M448.7 44.3h.01M1094.3 23.1h.01M1321.2 40.2h.01M60.2 7.6h.01M101.5 35.3h.01M427.8 16.2h.01M594.9 4.8h.01M1207.9 52.0h.01M742.5 27.6h.01M409.9 37.4h.01M460.9 60.5h.01M1270.7 45.1h.01M1097.7 4.7h.01M164.4 21.4h.01M167.7 26.2h.01M1310.5 51.7h.01M1274.1 13.7h.01M294.8 1.5h.01M363.7 3.5h.01M701.9 18.6h.01M895.4 34.8h.01M793.9 18.6h.01M976.6 42.7h.01M949.3 29.2h.01M616.5 17.7h.01M53.3 28.9h.01M819.0 11.5h.01M1143.0 54.5h.01M1134.4 50.6h.01M649.0 10.9h.01M360.3 45.7h.01M1308.6 6.9h.01M8.3 21.9h.01M464.2 37.1h.01M149.3 52.3h.01M449.3 56.3h.01M437.6 18.9h.01M233.7 59.9h.01M783.4 51.2h.01M83.8 33.7h.01M974.2 61.0h.01M1244.8 6.4h.01M496.0 61.9h.01M710.8 59.3h.01M336.9 1.6h.01M1257.5 16.4h.01M745.1 22.4h.01M767.6 57.9h.01M1258.4 54.4h.01M341.2 50.9h.01M24.4 25.8h.01M1254.8 15.8h.01M488.0 36.1h.01M314.5 43.9h.01M867.2 5.9h.01M1222.8 4.4h.01M925.7 21.6h.01M190.8 4.8h.01M1326.0 49.6h.01M609.8 49.3h.01M1288.9 57.4h.01M707.7 17.0h.01M689.1 60.8h.01M970.5 41.5h.01M1120.2 25.4h.01M742.8 52.6h.01M264.7 53.3h.01M32.7 33.3h.01M764.0 9.1h.01M1225.3 27.2h.01M246.0 25.5h.01M786.0 26.6h.01M3.9 5.7h.01M947.9 8.2h.01M339.5 50.1h.01M1145.1 54.7h.01M231.9 0.3h.01M1002.4 37.1h.01M484.4 1.1h.01M573.5 14.7h.01M781.4 60.8h.01M278.2 4.7h.01M923.0 6.7h.01M296.3 27.2h.01M1310.5 20.1h.01M419.8 29.5h.01M215.7 24.9h.01M930.7 20.1h.01M1058.4 11.4h.01M134.9 38.9h.01M601.9 56.9h.01M139.7 46.3h.01M890.2 23.0h.01M170.5 37.9h.01M1007.7 29.3h.01M628.0 42.5h.01M809.9 26.2h.01M247.3 28.7h.01M730.7 55.6h.01M1322.1 34.5h.01M436.7 13.8h.01M837.9 45.8h.01M329.3 42.8h.01M1328.0 24.3h.01M1247.7 27.1h.01M866.8 53.7h.01M270.3 21.4h.01M1307.9 4.0h.01M406.9 29.5h.01M989.9 39.1h.01M1235.7 41.5h.01M2.0 4.4h.01M48.6 26.8h.01M35.9 32.6h.01" stroke="#98a8c6" stroke-width="2.05" stroke-linecap="round" opacity="0.72" fill="none" filter="url(#sb)"/>
<path d="M840.7 12.5h.01M1137.8 25.6h.01M1275.8 22.2h.01M823.9 33.6h.01M349.5 48.3h.01M5.3 15.5h.01M426.2 54.7h.01M665.3 2.3h.01M397.4 37.8h.01M1074.9 6.8h.01M1035.7 24.2h.01M696.6 26.1h.01M582.6 61.4h.01M1221.4 56.9h.01M977.8 43.4h.01M188.1 2.2h.01M1104.2 41.7h.01M838.1 19.4h.01M355.0 57.1h.01M707.1 1.2h.01M452.5 21.6h.01M89.9 60.6h.01M1200.0 50.5h.01M5.6 25.9h.01M148.3 45.0h.01M1075.7 48.9h.01M1052.2 7.5h.01M17.8 5.8h.01M1119.5 51.4h.01M686.0 14.5h.01M1138.9 7.5h.01M431.8 0.1h.01M1306.2 25.7h.01M1024.8 49.7h.01M772.2 61.2h.01M1029.3 57.5h.01M1280.3 5.1h.01M997.6 14.0h.01M431.4 21.2h.01M1313.7 3.7h.01M578.0 7.9h.01M1325.6 30.8h.01M932.8 32.2h.01M1019.6 20.9h.01M549.5 46.2h.01M933.8 55.0h.01M411.0 52.6h.01M979.7 35.5h.01M542.4 35.2h.01M102.1 6.0h.01" stroke="#aebdd8" stroke-width="2.55" stroke-linecap="round" opacity="0.78" fill="none" filter="url(#sb)"/>
<circle cx="755" cy="9" r="4.5" fill="url(#st)"/>
<circle cx="877" cy="40" r="4.5" fill="url(#st)"/>
<circle cx="815" cy="52" r="5" fill="url(#st)"/>
<circle cx="947" cy="57" r="6" fill="url(#st)"/>
<circle cx="1177" cy="34" r="4.5" fill="url(#st)"/>
<circle cx="962" cy="9" r="3" fill="url(#st)"/>
<circle cx="892" cy="12" r="3" fill="url(#st)"/>
<circle cx="793" cy="16" r="3.5" fill="url(#st)"/>
<circle cx="610" cy="29" r="4" fill="url(#st)"/>
<circle cx="494" cy="12" r="4.5" fill="url(#st)"/>
<circle cx="468" cy="8" r="3.5" fill="url(#st)"/>
<circle cx="425" cy="46" r="4" fill="url(#st)"/>
<circle cx="441" cy="53" r="3.5" fill="url(#st)"/>
<circle cx="433" cy="5" r="4.5" fill="url(#st)"/>
<circle cx="1010" cy="38" r="3" fill="url(#st)"/>
<circle cx="1000" cy="55" r="3" fill="url(#st)"/>
<circle cx="1015" cy="10" r="2.5" fill="url(#st)"/>
<circle cx="1300" cy="40" r="3" fill="url(#st)"/>
<circle cx="1250" cy="15" r="2.5" fill="url(#st)"/>
<circle cx="413.8" cy="7.6" r="1.9" fill="url(#st)" opacity=".8"/>
<circle cx="952.7" cy="45.3" r="2.5" fill="url(#st)" opacity=".8"/>
<circle cx="273.7" cy="44.8" r="2.8" fill="url(#st)" opacity=".8"/>
<circle cx="822.9" cy="14.1" r="2.5" fill="url(#st)" opacity=".8"/>
<circle cx="524.6" cy="16.7" r="2.0" fill="url(#st)" opacity=".8"/>
<circle cx="1149.4" cy="39.2" r="2.9" fill="url(#st)" opacity=".8"/>
<circle cx="228.7" cy="16.4" r="2.4" fill="url(#st)" opacity=".8"/>
<circle cx="78.5" cy="18.7" r="2.4" fill="url(#st)" opacity=".8"/>
<circle cx="640.3" cy="56.4" r="2.5" fill="url(#st)" opacity=".8"/>
<circle cx="847.3" cy="36.3" r="2.7" fill="url(#st)" opacity=".8"/>
<circle cx="486.9" cy="0.0" r="3.0" fill="url(#st)" opacity=".8"/>
<circle cx="1053.1" cy="7.9" r="1.9" fill="url(#st)" opacity=".8"/>
<circle cx="295.4" cy="40.8" r="2.0" fill="url(#st)" opacity=".8"/>
<circle cx="26.5" cy="30.6" r="1.8" fill="url(#st)" opacity=".8"/>
<circle cx="344.1" cy="23.7" r="2.0" fill="url(#st)" opacity=".8"/>
<circle cx="3.3" cy="16.1" r="2.1" fill="url(#st)" opacity=".8"/>
<circle cx="430.9" cy="25.7" r="2.2" fill="url(#st)" opacity=".8"/>
<circle cx="430.7" cy="1.2" r="2.8" fill="url(#st)" opacity=".8"/>
<circle cx="981.1" cy="30.6" r="1.8" fill="url(#st)" opacity=".8"/>
<circle cx="310.0" cy="55.8" r="2.3" fill="url(#st)" opacity=".8"/>
<circle cx="272.9" cy="50.8" r="2.9" fill="url(#st)" opacity=".8"/>
<circle cx="162.4" cy="31.1" r="2.5" fill="url(#st)" opacity=".8"/>
<circle cx="155.9" cy="19.8" r="2.5" fill="url(#st)" opacity=".8"/>
<circle cx="895.1" cy="39.0" r="2.5" fill="url(#st)" opacity=".8"/>
<circle cx="502.3" cy="4.3" r="1.8" fill="url(#st)" opacity=".8"/>
<rect x="0" y="0" width="520" height="62" fill="url(#lf)"/><rect x="1160" y="0" width="169" height="62" fill="#0e1016" opacity=".3"/>
<circle cx="1148" cy="6" r="54" fill="#2a3244" opacity="0.2"/>
<filter id="tg" x="0" y="0" width="1" height="1"><feTurbulence type="fractalNoise" baseFrequency="0.4" numOctaves="2" seed="5" result="n"/><feColorMatrix in="n" type="matrix" values="0 0 0 0 0.08  0 0 0 0 0.1  0 0 0 0 0.15  -3 0 0 0 1.6"/><feComposite in2="SourceGraphic" operator="in"/></filter>
<circle cx="1087.3" cy="17" r="67.8" fill="url(#pl)"/>
<circle cx="1087.3" cy="17" r="67.8" fill="#000" filter="url(#tx)" opacity="0.62"/>
<circle cx="1087.3" cy="17" r="67.8" fill="#000" filter="url(#tg)" opacity="0.18"/>
<circle cx="1087.3" cy="17" r="67.3" fill="none" stroke="#b4c2d6" stroke-width="1.2" opacity="0.4" stroke-dasharray="95 400" transform="rotate(140 1087.3 17)"/>
</svg>
<svg width="1329" height="62" viewBox="0 0 1329 62"><g fill="#fff" stroke="#fff" font-family="DejaVu Sans, Liberation Sans, sans-serif"><text x="0.0" y="28.0" font-size="35.4" textLength="104.4" lengthAdjust="spacingAndGlyphs" stroke-width="0.7">NASA</text> <text x="115.0" y="28.0" font-size="35.4" textLength="194.8" lengthAdjust="spacingAndGlyphs" stroke-width="0.7">E<tspan font-size="27.7">XOPLANET</tspan></text> <text x="320.4" y="28.0" font-size="35.4" textLength="144.8" lengthAdjust="spacingAndGlyphs" stroke-width="0.7">A<tspan font-size="27.7">RCHIVE</tspan></text> <text x="1.4" y="52.9" font-size="19.7" textLength="64.0" lengthAdjust="spacingAndGlyphs" stroke-width="0.8">NASA</text> <text x="71.0" y="52.9" font-size="19.7" textLength="117.8" lengthAdjust="spacingAndGlyphs" stroke-width="0.8">E<tspan font-size="15.6">XOPLANET</tspan></text> <text x="194.6" y="52.9" font-size="19.7" textLength="85.6" lengthAdjust="spacingAndGlyphs" stroke-width="0.8">S<tspan font-size="15.6">CIENCE</tspan></text> <text x="286.8" y="52.9" font-size="19.7" textLength="98.8" lengthAdjust="spacingAndGlyphs" stroke-width="0.8">I<tspan font-size="15.6">NSTITUTE</tspan></text></g></svg>
</div>
<div id="nav" class="abs">
<a style="left:19px;color:#fff">Home</a>
<a style="left:116px;color:#fff">About Us</a>
<a style="left:240px;color:#fff">Data</a>
<a style="left:327px;color:#fff">Tools</a>
<a style="left:421px;color:#fff">Support</a>
<a style="left:534px;color:#ff0">Login</a>
</div>
<div id="tb" class="abs">
<svg style="left:5px;top:7px" width="17" height="17" viewBox="0 0 17 17"><defs><linearGradient id="gb" x1="0" y1="0" x2="1" y2="1"><stop offset="0" stop-color="#1f7af0"/><stop offset="0.55" stop-color="#4a94f3"/><stop offset="1" stop-color="#9cc4f8"/></linearGradient><linearGradient id="gc" x1="0" y1="0" x2="1" y2="1"><stop offset="0" stop-color="#c4d9fa"/><stop offset="1" stop-color="#f6fbff"/></linearGradient></defs><rect width="17" height="17" rx="1" fill="url(#gb)"/><g fill="url(#gc)"><rect x="1" y="1" width="4" height="3"/><rect x="6" y="1" width="5" height="3"/><rect x="12" y="1" width="4" height="3"/><rect x="1" y="5" width="4" height="3"/><rect x="6" y="5" width="5" height="3"/><rect x="12" y="5" width="4" height="3"/><rect x="1" y="9" width="4" height="3"/><rect x="6" y="9" width="5" height="3"/><rect x="12" y="9" width="4" height="3"/><rect x="1" y="13" width="4" height="3"/><rect x="6" y="13" width="5" height="3"/><rect x="12" y="13" width="4" height="3"/></g><g fill="#6ba6f4" opacity=".2"><rect x="1" y="2" width="15" height="1"/><rect x="1" y="6" width="15" height="1"/><rect x="1" y="10" width="15" height="1"/><rect x="1" y="14" width="15" height="1"/></g></svg>
<span class="l" style="left:29px">Select Columns</span>
<svg style="left:130px;top:8px" width="16" height="16" viewBox="0 0 16 16"><defs><linearGradient id="fb" x1="0" y1="0" x2="1" y2="0"><stop offset="0" stop-color="#727272"/><stop offset="1" stop-color="#333"/></linearGradient><linearGradient id="fl1" x1="0" y1="0" x2="0" y2="1"><stop offset="0" stop-color="#f6f6f6"/><stop offset="1" stop-color="#b8b8b8"/></linearGradient><linearGradient id="fs" x1="0" y1="0" x2="1" y2="0"><stop offset="0" stop-color="#ececec"/><stop offset="1" stop-color="#9c9c9c"/></linearGradient></defs><path d="M0.3 0.3 h15.4 v15.4 h-14.4 l-1 -1z" fill="url(#fb)"/><rect x="2" y="0.6" width="12" height="7.6" fill="#fcfcfc"/><rect x="3" y="1.6" width="10" height="5.4" fill="url(#fl1)"/><rect x="3.4" y="10.2" width="10.6" height="5.2" fill="url(#fs)"/><rect x="10.3" y="11.3" width="2.1" height="3.2" fill="#2c2c2c"/></svg>
<span class="l" style="left:153px">Download Table</span>
<svg style="left:254px;top:7px" width="18" height="18" viewBox="0 0 18 18"><rect x="0.5" y="0.5" width="17" height="17" fill="#fbfbfb" stroke="#a2a2a2"/><path d="M0.8 13 L2.6 3.6" fill="none" stroke="#9a9a9a" stroke-width="0.9"/><path d="M2.6 3.6 L10.3 14.8" fill="none" stroke="#333" stroke-width="1.15"/><path d="M10.3 14.8 L13.4 11.8 L15.4 3.6" fill="none" stroke="#666" stroke-width="1"/><path d="M15.4 3.6 L17.3 8.2" fill="none" stroke="#555" stroke-width="1.2"/></svg>
<span class="l" style="left:279px">Plot Table</span>
<svg style="left:345px;top:4px" width="24" height="24" viewBox="0 0 24 24"><defs><radialGradient id="mg" cx="0.62" cy="0.35" r="0.7"><stop offset="0" stop-color="#fff"/><stop offset="0.35" stop-color="#dde9ef"/><stop offset="1" stop-color="#c3d6df"/></radialGradient></defs><line x1="4.6" y1="18.6" x2="10.2" y2="12.6" stroke="#505050" stroke-width="1.9" stroke-linecap="butt"/><line x1="4.6" y1="18.6" x2="10.2" y2="12.6" stroke="#f2f2f2" stroke-width="1.0" stroke-dasharray="0.9 0.9"/><circle cx="10.6" cy="12.3" r="0.9" fill="#111"/><circle cx="14.1" cy="8.8" r="4.5" fill="url(#mg)" stroke="#808080" stroke-width="1.15"/></svg>
<span class="l" style="left:371px">View Documentation</span>
<span class="l" style="left:497px;color:#a0a0a0">User Preferences</span>
</div>
<div id="tabline" class="abs"></div><div id="tab" class="abs">Planetary Systems</div>
<div id="tline1" class="abs"></div><div id="tline2" class="abs"></div><div id="tline3" class="abs"></div>
<div id="hdr" class="abs"></div><div id="hdrc" class="abs"></div><div id="fl" class="abs"></div>
<div class="row e" style="top:255px">
<div class="cb"><svg width="13" height="13" viewBox="0 0 13 13"><path d="M1.5 6.5 L5.5 10 L12.6 3.6" fill="none" stroke="#1a4878" stroke-width="1.4"/></svg></div>
<div class="c n" style="left:27px">HD 224693 b</div>
<div class="c" style="left:427px">1.93±0.18</div>
<div class="c" style="left:512px">1.31±0.29</div>
<div class="c" style="left:597px">23h59m54.00s</div>
<div class="c" style="left:701px">-22d25m40.80s</div>
</div>
<div class="row o" style="top:278px">
<div class="cb"><svg width="13" height="13" viewBox="0 0 13 13"><path d="M1.5 6.5 L5.5 10 L12.6 3.6" fill="none" stroke="#1a4878" stroke-width="1.4"/></svg></div>
<div class="c n" style="left:27px">HD 224693 b</div>
<div class="c" style="left:427px">1.70±0.3</div>
<div class="c" style="left:512px">1.33±0.1</div>
<div class="c" style="left:597px">23h59m54.00s</div>
<div class="c" style="left:701px">-22d25m40.80s</div>
</div>
<div class="row e" style="top:301px">
<div class="cb"><svg width="13" height="13" viewBox="0 0 13 13"><path d="M1.5 6.5 L5.5 10 L12.6 3.6" fill="none" stroke="#1a4878" stroke-width="1.4"/></svg></div>
<div class="c n" style="left:27px">WASP-8 c</div>
<div class="c" style="left:512px">1.04±0.08</div>
<div class="c" style="left:597px">23h59m36.21s</div>
<div class="c" style="left:701px">-35d01m52.81s</div>
</div>
<div class="row o" style="top:324px">
<div class="cb"><svg width="13" height="13" viewBox="0 0 13 13"><path d="M1.5 6.5 L5.5 10 L12.6 3.6" fill="none" stroke="#1a4878" stroke-width="1.4"/></svg></div>
<div class="c n" style="left:27px">WASP-8 b</div>
<div class="c" style="left:227px">1.038&nbsp;<span class="ss"><span>+0.007</span><span>-0.047</span></span></div>
<div class="c" style="left:327px">2.244&nbsp;<span class="ss"><span>+0.079</span><span>-0.093</span></span></div>
<div class="c" style="left:427px">0.945±0.051</div>
<div class="c" style="left:512px">1.030±0.061</div>
<div class="c" style="left:597px">23h59m36.21s</div>
<div class="c" style="left:701px">-35d01m52.81s</div>
</div>
<div class="row e" style="top:347px">
<div class="cb"><svg width="13" height="13" viewBox="0 0 13 13"><path d="M1.5 6.5 L5.5 10 L12.6 3.6" fill="none" stroke="#1a4878" stroke-width="1.4"/></svg></div>
<div class="c n" style="left:27px">WASP-8 b</div>
<div class="c" style="left:227px">1.13±0.05</div>
<div class="c" style="left:327px">2.54±0.33</div>
<div class="c" style="left:427px">1.03±0.04</div>
<div class="c" style="left:512px">1.34±0.26</div>
<div class="c" style="left:597px">23h59m36.21s</div>
<div class="c" style="left:701px">-35d01m52.81s</div>
</div>
<div class="row o" style="top:370px">
<div class="cb"><svg width="13" height="13" viewBox="0 0 13 13"><path d="M1.5 6.5 L5.5 10 L12.6 3.6" fill="none" stroke="#1a4878" stroke-width="1.4"/></svg></div>
<div class="c n" style="left:27px">WASP-8 b</div>
<div class="c" style="left:227px">1.038<span class="ss"><span>+0.007</span><span>-0.047</span></span></div>
<div class="c" style="left:327px">2.132<span class="ss"><span>+0.080</span><span>-0.081</span></span></div>
<div class="c" style="left:427px">0.945<span class="ss"><span>+0.051</span><span>-0.036</span></span></div>
<div class="c" style="left:512px">1.030<span class="ss"><span>+0.054</span><span>-0.061</span></span></div>
<div class="c" style="left:597px">23h59m36.21s</div>
<div class="c" style="left:701px">-35d01m52.81s</div>
</div>
<div class="row e" style="top:393px">
<div class="cb"><svg width="13" height="13" viewBox="0 0 13 13"><path d="M1.5 6.5 L5.5 10 L12.6 3.6" fill="none" stroke="#1a4878" stroke-width="1.4"/></svg></div>
<div class="c n" style="left:27px">WASP-8 b</div>
<div class="c" style="left:227px">1.0</div>
<div class="c" style="left:327px">2.2</div>
<div class="c" style="left:597px">23h59m36.21s</div>
<div class="c" style="left:701px">-35d01m52.81s</div>
</div>
<div class="row o" style="top:416px">
<div class="cb"><svg width="13" height="13" viewBox="0 0 13 13"><path d="M1.5 6.5 L5.5 10 L12.6 3.6" fill="none" stroke="#1a4878" stroke-width="1.4"/></svg></div>
<div class="c n" style="left:27px">WASP-8 b</div>
<div class="c" style="left:427px">0.945<span class="ss"><span>+0.051</span><span>-0.036</span></span></div>
<div class="c" style="left:597px">23h59m36.21s</div>
<div class="c" style="left:701px">-35d01m52.81s</div>
</div>
<div class="row e" style="top:439px">
<div class="cb"><svg width="13" height="13" viewBox="0 0 13 13"><path d="M1.5 6.5 L5.5 10 L12.6 3.6" fill="none" stroke="#1a4878" stroke-width="1.4"/></svg></div>
<div class="c n" style="left:27px">WASP-8 b</div>
<div class="c" style="left:327px">2.24<span class="ss"><span>+0.11</span><span>-0.12</span></span></div>
<div class="c" style="left:512px">1.04±0.08</div>
<div class="c" style="left:597px">23h59m36.21s</div>
<div class="c" style="left:701px">-35d01m52.81s</div>
</div>
<div class="row o" style="top:462px">
<div class="cb"><svg width="13" height="13" viewBox="0 0 13 13"><path d="M1.5 6.5 L5.5 10 L12.6 3.6" fill="none" stroke="#1a4878" stroke-width="1.4"/></svg></div>
<div class="c n" style="left:27px">HD 224538 b</div>
<div class="c" style="left:427px">1.54±0.06</div>
<div class="c" style="left:512px">1.34±0.05</div>
<div class="c" style="left:597px">23h58m51.94s</div>
<div class="c" style="left:701px">-61d35m12.70s</div>
</div>
<div class="row e" style="top:485px">
<div class="cb"><svg width="13" height="13" viewBox="0 0 13 13"><path d="M1.5 6.5 L5.5 10 L12.6 3.6" fill="none" stroke="#1a4878" stroke-width="1.4"/></svg></div>
<div class="c n" style="left:27px">WASP-5 b</div>
<div class="c" style="left:227px">1.14<span class="ss"><span>+0.10</span><span>-0.04</span></span></div>
<div class="c" style="left:327px">1.555<span class="ss"><span>+0.066</span><span>-0.072</span></span></div>
<div class="c" style="left:427px">1.060<span class="ss"><span>+0.076</span><span>-0.028</span></span></div>
<div class="c" style="left:512px">1.000<span class="ss"><span>+0.063</span><span>-0.064</span></span></div>
<div class="c" style="left:597px">23h57m23.77s</div>
<div class="c" style="left:701px">-41d16m37.99s</div>
</div>
<div class="row o" style="top:508px">
<div class="cb"><svg width="13" height="13" viewBox="0 0 13 13"><path d="M1.5 6.5 L5.5 10 L12.6 3.6" fill="none" stroke="#1a4878" stroke-width="1.4"/></svg></div>
<div class="c n" style="left:27px">WASP-5 b</div>
<div class="c" style="left:227px">1.175±0.056</div>
<div class="c" style="left:327px">1.595±0.053</div>
<div class="c" style="left:427px">1.088±0.041</div>
<div class="c" style="left:512px">1.033±0.050</div>
<div class="c" style="left:597px">23h57m23.77s</div>
<div class="c" style="left:701px">-41d16m37.99s</div>
</div>
<div class="row e" style="top:531px">
<div class="cb"><svg width="13" height="13" viewBox="0 0 13 13"><path d="M1.5 6.5 L5.5 10 L12.6 3.6" fill="none" stroke="#1a4878" stroke-width="1.4"/></svg></div>
<div class="c n" style="left:27px">WASP-5 b</div>
<div class="c" style="left:227px">1.167±0.043</div>
<div class="c" style="left:327px">1.568±0.071</div>
<div class="c" style="left:427px">1.082±0.038</div>
<div class="c" style="left:512px">1.000±0.065</div>
<div class="c" style="left:597px">23h57m23.77s</div>
<div class="c" style="left:701px">-41d16m37.99s</div>
</div>
<div class="row o" style="top:554px">
<div class="cb"><svg width="13" height="13" viewBox="0 0 13 13"><path d="M1.5 6.5 L5.5 10 L12.6 3.6" fill="none" stroke="#1a4878" stroke-width="1.4"/></svg></div>
<div class="c n" style="left:27px">WASP-5 b</div>
<div class="c" style="left:227px">1.087&nbsp;<span class="ss"><span>+0.068</span><span>-0.071</span></span></div>
<div class="c" style="left:327px">1.58&nbsp;<span class="ss"><span>+0.13</span><span>-0.10</span></span></div>
<div class="c" style="left:427px">1.029&nbsp;<span class="ss"><span>+0.056</span><span>-0.069</span></span></div>
<div class="c" style="left:512px">0.96&nbsp;<span class="ss"><span>+0.13</span><span>-0.09</span></span></div>
<div class="c" style="left:597px">23h57m23.77s</div>
<div class="c" style="left:701px">-41d16m37.99s</div>
</div>
<div class="row e" style="top:577px">
<div class="cb"><svg width="13" height="13" viewBox="0 0 13 13"><path d="M1.5 6.5 L5.5 10 L12.6 3.6" fill="none" stroke="#1a4878" stroke-width="1.4"/></svg></div>
<div class="c n" style="left:27px">WASP-5 b</div>
<div class="c" style="left:227px">1.104±0.057</div>
<div class="c" style="left:327px">1.585±0.064</div>
<div class="c" style="left:427px">1.077±0.040</div>
<div class="c" style="left:512px">1.004±0.060</div>
<div class="c" style="left:597px">23h57m23.77s</div>
<div class="c" style="left:701px">-41d16m37.99s</div>
</div>
<div id="gray" class="abs"></div>
<div class="vs" style="left:22px"></div>
<div class="vs" style="left:222px"></div>
<div class="vs" style="left:322px"></div>
<div class="vs" style="left:422px"></div>
<div class="vs" style="left:507px"></div>
<div class="vs" style="left:592px"></div>
<div class="vs" style="left:696px"></div>
<div class="vs" style="left:807px"></div>
<div class="vd" style="left:22px"></div>
<div class="vd" style="left:222px"></div>
<div class="vd" style="left:322px"></div>
<div class="vd" style="left:422px"></div>
<div class="vd" style="left:507px"></div>
<div class="vd" style="left:592px"></div>
<div class="vd" style="left:696px"></div>
<div class="vd" style="left:807px"></div>
<div class="sb u" style="left:39px"><i></i></div>
<div class="sb d" style="left:64px"><i></i></div>
<svg class="rx" style="left:204px" viewBox="0 0 12 12"><rect x="0.5" y="0.5" width="11" height="11" rx="0.8" fill="url(#rxg)" stroke="#d63a22"/><rect x="1.5" y="1.5" width="9" height="9" fill="none" stroke="#f0957f" stroke-opacity=".7"/><path d="M3.2 3.2 L8.8 8.8 M8.8 3.2 L3.2 8.8" stroke="#fff" stroke-width="2.2"/></svg>
<div class="hc" style="left:28.0px;width:200px">Planet Name</div>
<div class="inp" style="left:35px;width:140px"></div>
<div class="q" style="left:179px">?</div>
<div class="sb u" style="left:239px"><i></i></div>
<div class="sb d" style="left:264px"><i></i></div>
<svg class="rx" style="left:304px" viewBox="0 0 12 12"><rect x="0.5" y="0.5" width="11" height="11" rx="0.8" fill="url(#rxg)" stroke="#d63a22"/><rect x="1.5" y="1.5" width="9" height="9" fill="none" stroke="#f0957f" stroke-opacity=".7"/><path d="M3.2 3.2 L8.8 8.8 M8.8 3.2 L3.2 8.8" stroke="#fff" stroke-width="2.2"/></svg>
<div class="hc" style="left:178.0px;width:200px">Planet Radius<br>[Jupiter Radius]</div>
<div class="inp" style="left:235px;width:68px"></div>
<div class="q" style="left:307px">?</div>
<div class="sb u" style="left:339px"><i></i></div>
<div class="sb d" style="left:364px"><i></i></div>
<svg class="rx" style="left:404px" viewBox="0 0 12 12"><rect x="0.5" y="0.5" width="11" height="11" rx="0.8" fill="url(#rxg)" stroke="#d63a22"/><rect x="1.5" y="1.5" width="9" height="9" fill="none" stroke="#f0957f" stroke-opacity=".7"/><path d="M3.2 3.2 L8.8 8.8 M8.8 3.2 L3.2 8.8" stroke="#fff" stroke-width="2.2"/></svg>
<div class="hc" style="left:278.0px;width:200px">Planet Mass<br>[Jupiter Mass]</div>
<div class="inp" style="left:335px;width:68px"></div>
<div class="q" style="left:407px">?</div>
<div class="sb u" style="left:439px"><i></i></div>
<div class="sb d" style="left:460px"><i></i></div>
<svg class="rx" style="left:490px" viewBox="0 0 12 12"><rect x="0.5" y="0.5" width="11" height="11" rx="0.8" fill="url(#rxg)" stroke="#d63a22"/><rect x="1.5" y="1.5" width="9" height="9" fill="none" stroke="#f0957f" stroke-opacity=".7"/><path d="M3.2 3.2 L8.8 8.8 M8.8 3.2 L3.2 8.8" stroke="#fff" stroke-width="2.2"/></svg>
<div class="hc" style="left:370.5px;width:200px">Stellar<br>Radius<br>[Solar<br>Radius]</div>
<div class="inp" style="left:435px;width:57px"></div>
<div class="q" style="left:496px">?</div>
<div class="sb u" style="left:524px"><i></i></div>
<div class="sb d" style="left:545px"><i></i></div>
<svg class="rx" style="left:575px" viewBox="0 0 12 12"><rect x="0.5" y="0.5" width="11" height="11" rx="0.8" fill="url(#rxg)" stroke="#d63a22"/><rect x="1.5" y="1.5" width="9" height="9" fill="none" stroke="#f0957f" stroke-opacity=".7"/><path d="M3.2 3.2 L8.8 8.8 M8.8 3.2 L3.2 8.8" stroke="#fff" stroke-width="2.2"/></svg>
<div class="hc" style="left:455.5px;width:200px">Stellar Mass<br>[Solar mass]</div>
<div class="inp" style="left:520px;width:57px"></div>
<div class="q" style="left:581px">?</div>
<div class="sb u" style="left:609px"><i></i></div>
<div class="sb d act" style="left:633px"><i></i></div>
<svg class="rx" style="left:678px" viewBox="0 0 12 12"><rect x="0.5" y="0.5" width="11" height="11" rx="0.8" fill="url(#rxg)" stroke="#d63a22"/><rect x="1.5" y="1.5" width="9" height="9" fill="none" stroke="#f0957f" stroke-opacity=".7"/><path d="M3.2 3.2 L8.8 8.8 M8.8 3.2 L3.2 8.8" stroke="#fff" stroke-width="2.2"/></svg>
<div class="hc" style="left:550.0px;width:200px">RA<br>[sexagesimal]</div>
<div class="inp" style="left:605px;width:71px"></div>
<div class="q" style="left:680px">?</div>
<div class="sb u" style="left:713px"><i></i></div>
<div class="sb d" style="left:738px"><i></i></div>
<svg class="rx" style="left:789px" viewBox="0 0 12 12"><rect x="0.5" y="0.5" width="11" height="11" rx="0.8" fill="url(#rxg)" stroke="#d63a22"/><rect x="1.5" y="1.5" width="9" height="9" fill="none" stroke="#f0957f" stroke-opacity=".7"/><path d="M3.2 3.2 L8.8 8.8 M8.8 3.2 L3.2 8.8" stroke="#fff" stroke-width="2.2"/></svg>
<div class="hc" style="left:657.5px;width:200px">Dec<br>[sexagesimal]</div>
<div class="inp" style="left:709px;width:76px"></div>
<div class="q" style="left:789px">?</div>
<div id="bot" class="abs"></div>
</body></html>
